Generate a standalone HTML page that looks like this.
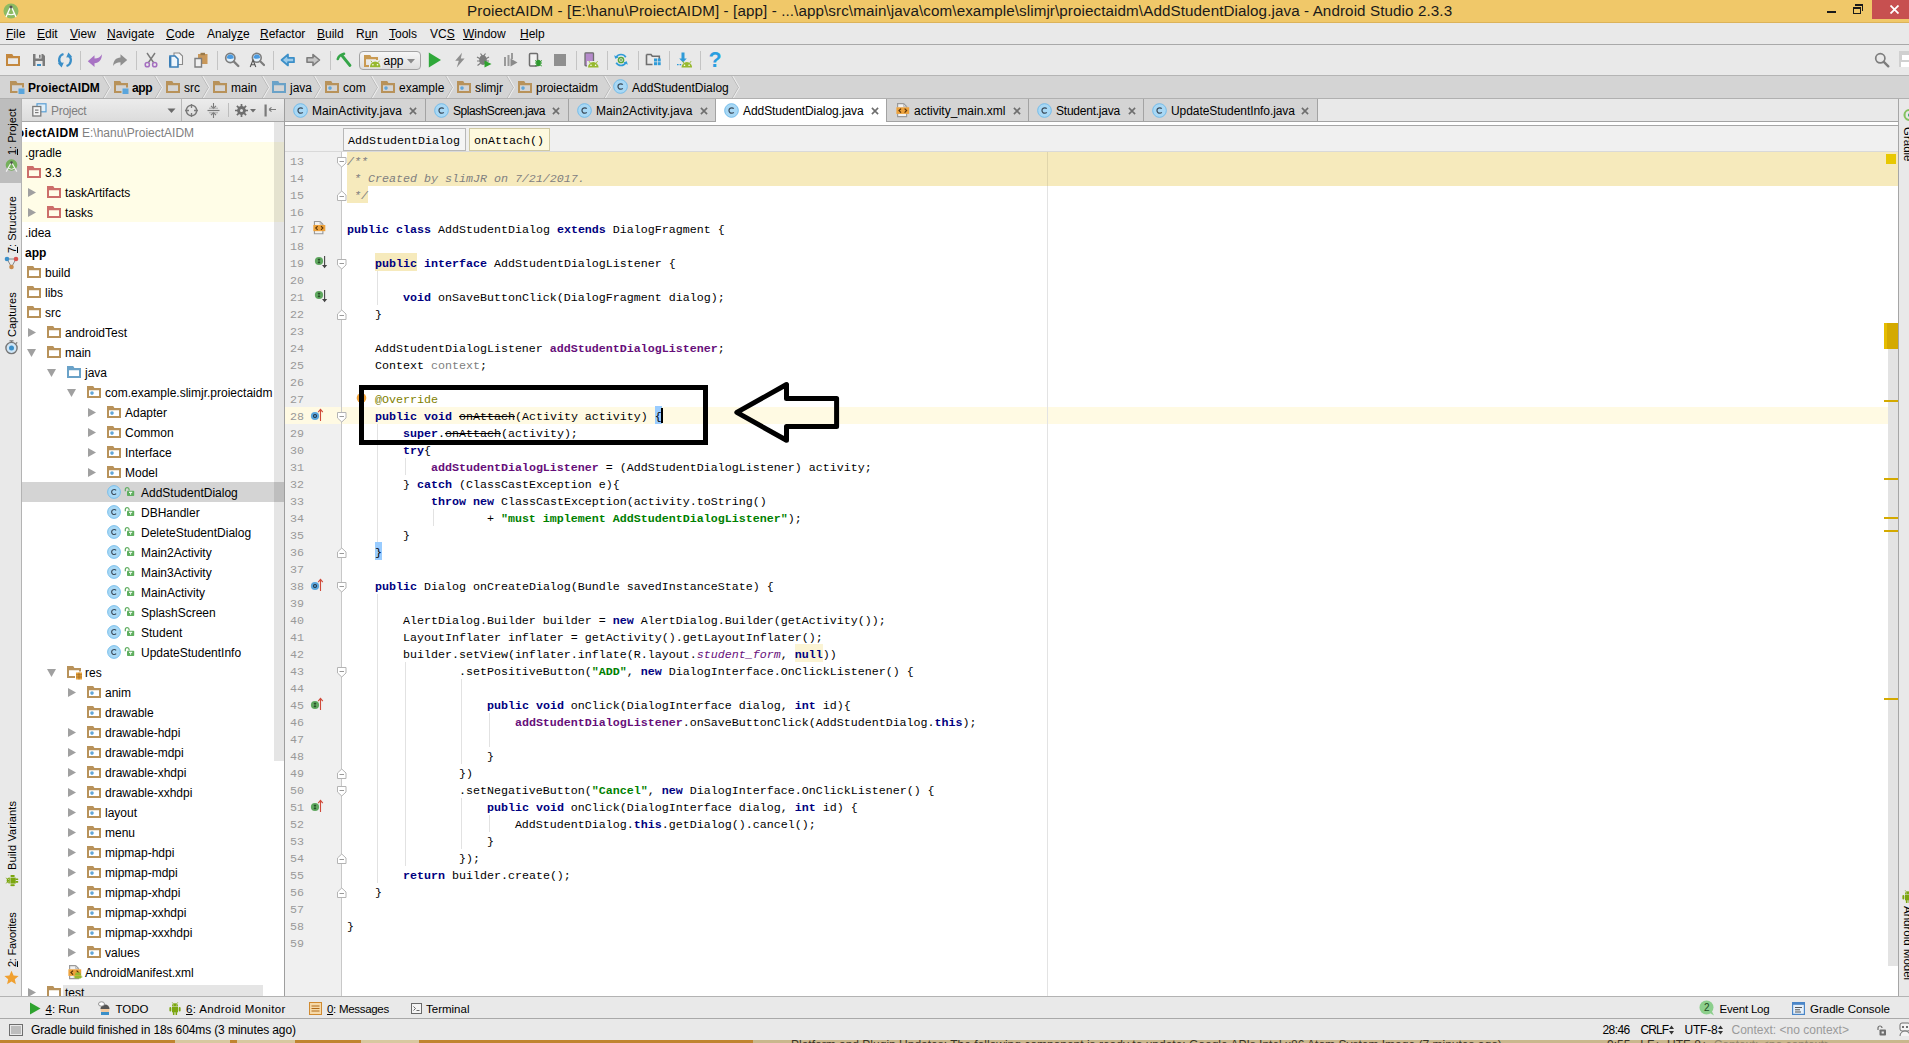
<!DOCTYPE html><html><head><meta charset="utf-8"><title>Android Studio</title><style>*{box-sizing:border-box;margin:0;padding:0}
html,body{width:1909px;height:1043px;overflow:hidden;background:#e9e9e9}
body{font-family:"Liberation Sans",sans-serif;font-size:12px;color:#000;position:relative}
.abs{position:absolute}
.t{position:absolute;white-space:nowrap;line-height:16px;height:16px}
u{text-decoration:underline;text-underline-offset:1px}
#title{left:0;top:0;width:1909px;height:23px;background:#f0c869}
#title .tt{left:467px;top:1px;font-size:15.2px;line-height:20px;height:20px;color:#1a1a1a;letter-spacing:0.095px}
#menu{left:0;top:23px;width:1909px;height:22px;background:#e9e9e9;border-bottom:1px solid #a9a9a9}
#toolbar{left:0;top:45px;width:1909px;height:31px;background:#e9e9e9;border-bottom:1px solid #b4b4b4}
#nav{left:0;top:76px;width:1909px;height:23px;background:#d4d4d4;border-bottom:1px solid #b0b0b0;overflow:hidden}
.sep{position:absolute;top:6px;width:1px;height:19px;background:#c4c4c4}
.ic{position:absolute}
.vt{position:absolute;font-size:11px;white-space:nowrap;line-height:16px;height:16px;width:0;transform-origin:0 0;transform:rotate(-90deg)}
#tree{left:22px;top:122px;width:262px;height:876px;background:#fff;overflow:hidden}
#tree b{font-weight:bold}
.mono,.cl,.ln{font-family:"Liberation Mono",monospace;font-size:11.667px}
.mono{white-space:nowrap;line-height:14px}
.cl{position:absolute;left:347px;height:17px;line-height:17px;white-space:pre;margin:0;padding-top:2px}
.ln{position:absolute;left:285px;width:19px;text-align:right;height:17px;line-height:17px;color:#999;padding-top:2px}
.k{color:#000080;font-weight:bold}
.s{color:#008000;font-weight:bold}
.f{color:#660e7a;font-weight:bold}
.sf{color:#660e7a;font-style:italic}
.c{color:#808080;font-style:italic}
.g{color:#808080}
.an{color:#808000}
.dp{text-decoration:line-through}
.hl{background:#f6eabc;padding-top:4px}
.hl2{background:#fbf4d4;padding-top:4px}
.br{background:#99ccff;padding-top:4px}
.vtr{position:absolute;white-space:nowrap;line-height:16px;height:16px;width:0;transform-origin:0 0;transform:rotate(90deg);font-size:11.5px}
.bt{font-size:11.5px}
</style></head><body>
<div id="title" class="abs">
<svg class="ic" style="left:3px;top:2px" width="18" height="18" viewBox="0 0 18 18"><circle cx="8" cy="9" r="7.5" fill="#8dbb63"/><path d="M3 15 L7.5 5 h1 L13 15" stroke="#fff" stroke-width="1.3" fill="none"/><path d="M4 11.5 Q8 14 12 11.5" stroke="#fff" stroke-width="1.2" fill="none"/><circle cx="8" cy="5" r="1.6" fill="#555"/></svg>
<div class="t tt">ProiectAIDM - [E:\hanu\ProiectAIDM] - [app] - ...\app\src\main\java\com\example\slimjr\proiectaidm\AddStudentDialog.java - Android Studio 2.3.3</div>
<div class="abs" style="left:1827px;top:11px;width:9px;height:2px;background:#1a1a1a"></div>
<div class="abs" style="left:1853px;top:7px;width:8px;height:7px;border:1px solid #1a1a1a;border-top-width:2px"></div>
<div class="abs" style="left:1855px;top:4px;width:8px;height:7px;border:1px solid #1a1a1a;border-top-width:2px;border-left:none;border-bottom:none"></div>
<div class="abs" style="left:1872px;top:0;width:37px;height:19px;background:#c75050"></div>
<svg class="ic" style="left:1890px;top:5px" width="9" height="9" viewBox="0 0 9 9"><path d="M0.5 0.5 L8.5 8.5 M8.5 0.5 L0.5 8.5" stroke="#fff" stroke-width="1.8"/></svg>
<div class="abs" style="left:0;top:22px;width:1909px;height:1px;background:#dcb35a"></div>
</div>
<div id="menu" class="abs">
<div class="t" style="left:6px;top:3px"><u>F</u>ile</div>
<div class="t" style="left:37px;top:3px"><u>E</u>dit</div>
<div class="t" style="left:70px;top:3px"><u>V</u>iew</div>
<div class="t" style="left:107px;top:3px"><u>N</u>avigate</div>
<div class="t" style="left:166px;top:3px"><u>C</u>ode</div>
<div class="t" style="left:207px;top:3px">Analy<u>z</u>e</div>
<div class="t" style="left:260px;top:3px"><u>R</u>efactor</div>
<div class="t" style="left:317px;top:3px"><u>B</u>uild</div>
<div class="t" style="left:356px;top:3px">R<u>u</u>n</div>
<div class="t" style="left:389px;top:3px"><u>T</u>ools</div>
<div class="t" style="left:430px;top:3px">VC<u>S</u></div>
<div class="t" style="left:463px;top:3px"><u>W</u>indow</div>
<div class="t" style="left:520px;top:3px"><u>H</u>elp</div>
</div>
<div id="toolbar" class="abs"><svg class="ic" style="left:6px;top:7px" width="16" height="16" viewBox="0 0 16 16"><g transform="translate(0 2)"><path fill-rule="evenodd" d="M0 0 H6.2 L7.4 2 H14 V12 H0 Z M2 4.2 V10 H12 V4.2 Z" fill="#c4883e"/></g></svg><svg class="ic" style="left:31px;top:7px" width="16" height="16" viewBox="0 0 16 16"><path d="M2 2h10l2 2v10H2z" fill="#7b7b7b"/><rect x="4.5" y="2" width="6" height="4.5" fill="#e9e9e9"/><rect x="8" y="2.8" width="1.6" height="3" fill="#7b7b7b"/><rect x="4.5" y="9" width="7" height="5" fill="#e9e9e9"/><rect x="6" y="12" width="4" height="2" fill="#3b8fc8"/></svg><svg class="ic" style="left:56.5px;top:7px" width="16" height="16" viewBox="0 0 16 16"><path d="M6.5 2 A6 6 0 0 0 4.5 12.5 M9.5 14 A6 6 0 0 0 11.5 3.5" fill="none" stroke="#3b8fc8" stroke-width="2.3"/><path d="M0.8 11.2 l6 -0.6 -2.2 5z M15.2 4.8 l-6 0.6 2.2 -5z" fill="#3b8fc8"/></svg><svg class="ic" style="left:87px;top:7px" width="16" height="16" viewBox="0 0 16 16"><path d="M0.8 9.2 L7.5 3.2 V6.6 C11 6.6 13.6 5 14.9 2.2 C14.9 7.8 12 11 7.5 11.2 V15 Z" fill="#a873c4"/></svg><svg class="ic" style="left:112px;top:7px" width="16" height="16" viewBox="0 0 16 16"><path d="M15.2 8 L8.5 2.2 V5.6 C4 5.8 1.2 8.8 1.2 14 C2.6 11.4 5 10.2 8.5 10.2 V13.8 Z" fill="#8f8f8f"/></svg><svg class="ic" style="left:143px;top:7px" width="16" height="16" viewBox="0 0 16 16"><path d="M4 1 L10.5 10.5 M12 1 L5.5 10.5" stroke="#7a7a7a" stroke-width="1.4"/><circle cx="4.3" cy="12.7" r="2.1" fill="none" stroke="#a56fc0" stroke-width="1.5"/><circle cx="11.7" cy="12.7" r="2.1" fill="none" stroke="#a56fc0" stroke-width="1.5"/></svg><svg class="ic" style="left:167.5px;top:7px" width="16" height="16" viewBox="0 0 16 16"><path d="M6 1h5.5l3 3v8.5H6z" fill="#f4f4f4" stroke="#8a8a8a" stroke-width="1.1"/><path d="M2 4h5l3 3v8H2z" fill="#eef5fb" stroke="#3b7fb8" stroke-width="1.6"/><path d="M2.2 4.5v10" stroke="#3b7fb8" stroke-width="2.4"/></svg><svg class="ic" style="left:193px;top:7px" width="16" height="16" viewBox="0 0 16 16"><rect x="5" y="2" width="9.5" height="10" fill="#c9985a"/><rect x="7.5" y="0.8" width="4.5" height="2.4" fill="#9a7a4a"/><path d="M2 6.5h6.5v8.5H2z" fill="#f0f0f0" stroke="#7d7d7d" stroke-width="1.4"/></svg><svg class="ic" style="left:224px;top:7px" width="16" height="16" viewBox="0 0 16 16"><circle cx="6.3" cy="6" r="4.6" fill="#e4f1fa" stroke="#7d7d7d" stroke-width="1.7"/><path d="M2.9 6.2 a3.4 3.6 0 0 1 6.8 0 q-3.4 1.6 -6.8 0z" fill="#4a9ae0"/><path d="M9.8 9.5 L14.3 14" stroke="#7d7d7d" stroke-width="2.4" stroke-linecap="round"/></svg><svg class="ic" style="left:249px;top:7px" width="16" height="16" viewBox="0 0 16 16"><circle cx="7.8" cy="5.8" r="4.4" fill="#e4f1fa" stroke="#7d7d7d" stroke-width="1.6"/><path d="M4.6 6 a3.2 3.4 0 0 1 6.4 0 q-3.2 1.5 -6.4 0z" fill="#4a9ae0"/><path d="M11.2 9.2 L15 13" stroke="#7d7d7d" stroke-width="2.2" stroke-linecap="round"/><path d="M1.2 15 L4 8 L6.8 15 M2.2 12.7h3.6" stroke="#555" stroke-width="1.1" fill="none"/></svg><svg class="ic" style="left:280px;top:7px" width="16" height="16" viewBox="0 0 16 16"><path d="M1.5 8 L8 2.5 V5.8 H14 V10.2 H8 V13.5z" fill="#9ccbea" stroke="#3b8fc8" stroke-width="1.7" stroke-linejoin="round"/></svg><svg class="ic" style="left:304.5px;top:7px" width="16" height="16" viewBox="0 0 16 16"><path d="M14.5 8 L8 2.5 V5.8 H2 V10.2 H8 V13.5z" fill="#c6c6c6" stroke="#7d7d7d" stroke-width="1.6" stroke-linejoin="round"/></svg><svg class="ic" style="left:336px;top:7px" width="16" height="16" viewBox="0 0 16 16"><path d="M1.8 7 Q3 3 8 1.8" fill="none" stroke="#35a548" stroke-width="2.6" stroke-linecap="round"/><path d="M6.3 4 L14 13.5" stroke="#35a548" stroke-width="2.8" stroke-linecap="round"/></svg><svg class="ic" style="left:427px;top:7px" width="16" height="16" viewBox="0 0 16 16"><path d="M1.8 0.5 L14 8 L1.8 15.5z" fill="#2fa83a"/></svg><svg class="ic" style="left:451.5px;top:7px" width="16" height="16" viewBox="0 0 16 16"><path d="M10 0.8 L3.2 8.8 h3.6 L4.8 15.4 L12.6 6.6 h-3.8z" fill="#8f8f8f"/></svg><svg class="ic" style="left:476px;top:7px" width="16" height="16" viewBox="0 0 16 16"><ellipse cx="7" cy="8" rx="3.8" ry="5" fill="#7d7d7d"/><path d="M1 5 l3.5 2 M1 9h3 M1.5 13.5 l3-2.2 M13 5 l-3.5 2 M13 9h-3 M4.5 1.5 l1.6 2.2 M9.5 1.5 l-1.6 2.2" stroke="#7d7d7d" stroke-width="1.2"/><path d="M8.5 8.5 L15.5 12 L8.5 15.5z" fill="#2ea32e"/></svg><svg class="ic" style="left:502px;top:7px" width="16" height="16" viewBox="0 0 16 16"><rect x="2" y="5" width="2" height="9" fill="#9a9a9a"/><rect x="5.5" y="3" width="2" height="11" fill="#9a9a9a"/><rect x="9" y="1" width="2" height="6" fill="#9a9a9a"/><path d="M8.5 6.5 L15.5 10.5 L8.5 14.5z" fill="#8a8a8a"/></svg><svg class="ic" style="left:527px;top:7px" width="16" height="16" viewBox="0 0 16 16"><rect x="2.5" y="1.5" width="8" height="12.5" rx="1" fill="#f2f2f2" stroke="#6e6e6e" stroke-width="1.5"/><ellipse cx="11.5" cy="11" rx="2.2" ry="3.2" fill="#2e9a2e"/><path d="M8 8.5l2 1.2M8 11h2M8.2 14l2-1.4M15 8.5l-2 1.2M15 11h-2M14.8 14l-2-1.4" stroke="#2e9a2e" stroke-width="1"/></svg><svg class="ic" style="left:552px;top:7px" width="16" height="16" viewBox="0 0 16 16"><rect x="2" y="2" width="12" height="12" fill="#8f8f8f"/></svg><svg class="ic" style="left:583px;top:7px" width="16" height="16" viewBox="0 0 16 16"><rect x="2" y="0.8" width="8.5" height="13" rx="0.8" fill="#b58acb" stroke="#6e6e6e" stroke-width="1.3"/><rect x="4" y="9" width="12" height="7" fill="#e9e9e9"/><g transform="translate(10.3 12.6) scale(1)"><path d="M-5.3 3 a5.3 5.6 0 0 1 10.6 0z" fill="#97b92f"/><path d="M-3 -1.6 l-1.3 -1.9 M3 -1.6 l1.3 -1.9" stroke="#97b92f" stroke-width="0.9"/><circle cx="-2.3" cy="0.6" r="0.8" fill="#fff"/><circle cx="2.3" cy="0.6" r="0.8" fill="#fff"/></g></svg><svg class="ic" style="left:613px;top:7px" width="16" height="16" viewBox="0 0 16 16"><path d="M3.2 5.2 A5.6 5.6 0 0 1 12.8 5.2 M12.8 10.8 A5.6 5.6 0 0 1 3.2 10.8" fill="none" stroke="#2f9bd8" stroke-width="1.7"/><path d="M1.2 3.2 l1 3.6 3.4-1.4z M14.8 12.8 l-1-3.6-3.4 1.4z" fill="#2f9bd8"/><circle cx="8" cy="8" r="2.6" fill="none" stroke="#5aa83a" stroke-width="1.5"/><circle cx="8" cy="8" r="0.9" fill="#5aa83a"/></svg><svg class="ic" style="left:645px;top:7px" width="16" height="16" viewBox="0 0 16 16"><path d="M1.5 2.5 h4.5 l1.3 1.8 h7 v3 M1.5 2.5 v10 h6" fill="none" stroke="#6e6e6e" stroke-width="1.6"/><rect x="9" y="6.5" width="3" height="3" fill="#2f9bd8"/><rect x="12.7" y="6.5" width="3" height="3" fill="#2f9bd8"/><rect x="9" y="10.2" width="3" height="3" fill="#2f9bd8"/><rect x="12.7" y="10.2" width="3" height="3" fill="#2f9bd8"/></svg><svg class="ic" style="left:676px;top:7px" width="16" height="16" viewBox="0 0 16 16"><path d="M5.5 0.5 h3 v6 h2.3 L7 10.5 L3.2 6.5 h2.3z" fill="#2f9bd8"/><path d="M1 12.6h5" stroke="#2f9bd8" stroke-width="1.3" stroke-dasharray="1.6 1"/><g transform="translate(10.8 12.6) scale(1)"><path d="M-5.3 3 a5.3 5.6 0 0 1 10.6 0z" fill="#97b92f"/><path d="M-3 -1.6 l-1.3 -1.9 M3 -1.6 l1.3 -1.9" stroke="#97b92f" stroke-width="0.9"/><circle cx="-2.3" cy="0.6" r="0.8" fill="#fff"/><circle cx="2.3" cy="0.6" r="0.8" fill="#fff"/></g></svg><div class="t" style="left:708.5px;top:3px;font-size:21.5px;font-weight:bold;color:#2a9fe0;line-height:24px;height:24px">?</div><svg class="ic" style="left:1874px;top:7px" width="16" height="16" viewBox="0 0 16 16"><circle cx="6.3" cy="6.3" r="4.6" fill="none" stroke="#7d7d7d" stroke-width="1.7"/><path d="M9.8 9.8 L14.3 14.3" stroke="#7d7d7d" stroke-width="2.4" stroke-linecap="round"/></svg><div class="abs" style="left:1899px;top:6px;width:10px;height:16px;background:#d0d0d0"></div><div class="abs" style="left:1902px;top:10px;width:7px;height:5px;background:#fff"></div><div class="abs" style="left:1901px;top:17px;width:8px;height:5px;background:#fff"></div><div class="sep" style="left:80px"></div><div class="sep" style="left:136px"></div><div class="sep" style="left:217px"></div><div class="sep" style="left:273px"></div><div class="sep" style="left:330px"></div><div class="sep" style="left:576px"></div><div class="sep" style="left:607px"></div><div class="sep" style="left:638px"></div><div class="sep" style="left:669px"></div><div class="sep" style="left:700px"></div><div class="abs" style="left:359px;top:6px;width:62px;height:19px;border:1px solid #a3a3a3;border-radius:4px;background:linear-gradient(#f6f6f6,#dedede)"></div><svg class="ic" style="left:364px;top:8px" width="18" height="16" viewBox="0 0 18 16"><g transform="translate(0 2)"><path fill-rule="evenodd" d="M0 0 H6.2 L7.4 2 H14 V12 H0 Z M2 4.2 V10 H12 V4.2 Z" fill="#c99a52"/><rect x="5" y="5" width="13" height="8" fill="#ececec"/><g transform="translate(11.2 9.2) scale(1)"><path d="M-5.3 3 a5.3 5.6 0 0 1 10.6 0z" fill="#97b92f"/><path d="M-3 -1.6 l-1.3 -1.9 M3 -1.6 l1.3 -1.9" stroke="#97b92f" stroke-width="0.9"/><circle cx="-2.3" cy="0.6" r="0.8" fill="#fff"/><circle cx="2.3" cy="0.6" r="0.8" fill="#fff"/></g></g></svg><div class="t" style="left:383.5px;top:8px">app</div><svg class="ic" style="left:407px;top:14px" width="8" height="5" viewBox="0 0 8 5"><path d="M0 0 h8 l-4 4.5z" fill="#8a8a8a"/></svg></div>
<div id="nav" class="abs">
<svg class="ic" style="left:10px;top:3px" width="16" height="16" viewBox="0 0 16 16"><g transform="translate(0 2)"><path fill-rule="evenodd" d="M0 0 H6.2 L7.4 2 H14 V12 H0 Z M2 4.2 V10 H12 V4.2 Z" fill="#b8925a"/><rect x="7.5" y="6.5" width="7" height="6.5" fill="#d4d4d4"/><rect x="8.5" y="7.5" width="6" height="5.5" fill="#5aa5dc"/></g></svg>
<div class="t" style="left:28px;top:4px;font-weight:bold;letter-spacing:0.05px">ProiectAIDM</div>
<svg class="ic" style="left:102px;top:0" width="9" height="23" viewBox="0 0 9 23"><path d="M0.8 0 L7.5 11.5 L0.8 23" fill="none" stroke="#b9b9b9" stroke-width="1"/><path d="M1.8 0 L8.5 11.5 L1.8 23" fill="none" stroke="#efefef" stroke-width="1"/></svg>
<svg class="ic" style="left:114px;top:3px" width="16" height="16" viewBox="0 0 16 16"><g transform="translate(0 2)"><path fill-rule="evenodd" d="M0 0 H6.2 L7.4 2 H14 V12 H0 Z M2 4.2 V10 H12 V4.2 Z" fill="#b8925a"/><rect x="7.5" y="6.5" width="7" height="6.5" fill="#d4d4d4"/><rect x="8.5" y="7.5" width="6" height="5.5" fill="#5aa5dc"/></g></svg>
<div class="t" style="left:132px;top:4px;font-weight:bold;letter-spacing:-0.35px">app</div>
<svg class="ic" style="left:154px;top:0" width="9" height="23" viewBox="0 0 9 23"><path d="M0.8 0 L7.5 11.5 L0.8 23" fill="none" stroke="#b9b9b9" stroke-width="1"/><path d="M1.8 0 L8.5 11.5 L1.8 23" fill="none" stroke="#efefef" stroke-width="1"/></svg>
<svg class="ic" style="left:166px;top:3px" width="16" height="16" viewBox="0 0 16 16"><g transform="translate(0 2)"><path fill-rule="evenodd" d="M0 0 H6.2 L7.4 2 H14 V12 H0 Z M2 4.2 V10 H12 V4.2 Z" fill="#b8925a"/></g></svg>
<div class="t" style="left:184px;top:4px;">src</div>
<svg class="ic" style="left:201px;top:0" width="9" height="23" viewBox="0 0 9 23"><path d="M0.8 0 L7.5 11.5 L0.8 23" fill="none" stroke="#b9b9b9" stroke-width="1"/><path d="M1.8 0 L8.5 11.5 L1.8 23" fill="none" stroke="#efefef" stroke-width="1"/></svg>
<svg class="ic" style="left:213px;top:3px" width="16" height="16" viewBox="0 0 16 16"><g transform="translate(0 2)"><path fill-rule="evenodd" d="M0 0 H6.2 L7.4 2 H14 V12 H0 Z M2 4.2 V10 H12 V4.2 Z" fill="#b8925a"/></g></svg>
<div class="t" style="left:231px;top:4px;">main</div>
<svg class="ic" style="left:261px;top:0" width="9" height="23" viewBox="0 0 9 23"><path d="M0.8 0 L7.5 11.5 L0.8 23" fill="none" stroke="#b9b9b9" stroke-width="1"/><path d="M1.8 0 L8.5 11.5 L1.8 23" fill="none" stroke="#efefef" stroke-width="1"/></svg>
<svg class="ic" style="left:272px;top:3px" width="16" height="16" viewBox="0 0 16 16"><g transform="translate(0 2)"><path fill-rule="evenodd" d="M0 0 H6.2 L7.4 2 H14 V12 H0 Z M2 4.2 V10 H12 V4.2 Z" fill="#6aa2c8"/></g></svg>
<div class="t" style="left:290px;top:4px;">java</div>
<svg class="ic" style="left:313px;top:0" width="9" height="23" viewBox="0 0 9 23"><path d="M0.8 0 L7.5 11.5 L0.8 23" fill="none" stroke="#b9b9b9" stroke-width="1"/><path d="M1.8 0 L8.5 11.5 L1.8 23" fill="none" stroke="#efefef" stroke-width="1"/></svg>
<svg class="ic" style="left:325px;top:3px" width="16" height="16" viewBox="0 0 16 16"><g transform="translate(0 2)"><path fill-rule="evenodd" d="M0 0 H6.2 L7.4 2 H14 V12 H0 Z M2 4.2 V10 H12 V4.2 Z" fill="#b8925a"/><circle cx="5" cy="7.1" r="1.8" fill="#62a6d8"/></g></svg>
<div class="t" style="left:343px;top:4px;">com</div>
<svg class="ic" style="left:370px;top:0" width="9" height="23" viewBox="0 0 9 23"><path d="M0.8 0 L7.5 11.5 L0.8 23" fill="none" stroke="#b9b9b9" stroke-width="1"/><path d="M1.8 0 L8.5 11.5 L1.8 23" fill="none" stroke="#efefef" stroke-width="1"/></svg>
<svg class="ic" style="left:381px;top:3px" width="16" height="16" viewBox="0 0 16 16"><g transform="translate(0 2)"><path fill-rule="evenodd" d="M0 0 H6.2 L7.4 2 H14 V12 H0 Z M2 4.2 V10 H12 V4.2 Z" fill="#b8925a"/><circle cx="5" cy="7.1" r="1.8" fill="#62a6d8"/></g></svg>
<div class="t" style="left:399px;top:4px;">example</div>
<svg class="ic" style="left:445px;top:0" width="9" height="23" viewBox="0 0 9 23"><path d="M0.8 0 L7.5 11.5 L0.8 23" fill="none" stroke="#b9b9b9" stroke-width="1"/><path d="M1.8 0 L8.5 11.5 L1.8 23" fill="none" stroke="#efefef" stroke-width="1"/></svg>
<svg class="ic" style="left:457px;top:3px" width="16" height="16" viewBox="0 0 16 16"><g transform="translate(0 2)"><path fill-rule="evenodd" d="M0 0 H6.2 L7.4 2 H14 V12 H0 Z M2 4.2 V10 H12 V4.2 Z" fill="#b8925a"/><circle cx="5" cy="7.1" r="1.8" fill="#62a6d8"/></g></svg>
<div class="t" style="left:475px;top:4px;">slimjr</div>
<svg class="ic" style="left:506px;top:0" width="9" height="23" viewBox="0 0 9 23"><path d="M0.8 0 L7.5 11.5 L0.8 23" fill="none" stroke="#b9b9b9" stroke-width="1"/><path d="M1.8 0 L8.5 11.5 L1.8 23" fill="none" stroke="#efefef" stroke-width="1"/></svg>
<svg class="ic" style="left:518px;top:3px" width="16" height="16" viewBox="0 0 16 16"><g transform="translate(0 2)"><path fill-rule="evenodd" d="M0 0 H6.2 L7.4 2 H14 V12 H0 Z M2 4.2 V10 H12 V4.2 Z" fill="#b8925a"/><circle cx="5" cy="7.1" r="1.8" fill="#62a6d8"/></g></svg>
<div class="t" style="left:536px;top:4px;">proiectaidm</div>
<svg class="ic" style="left:603px;top:0" width="9" height="23" viewBox="0 0 9 23"><path d="M0.8 0 L7.5 11.5 L0.8 23" fill="none" stroke="#b9b9b9" stroke-width="1"/><path d="M1.8 0 L8.5 11.5 L1.8 23" fill="none" stroke="#efefef" stroke-width="1"/></svg>
<svg class="ic" style="left:613px;top:3px" width="15" height="15" viewBox="0 0 16 16"><circle cx="8" cy="8" r="7.3" fill="#a8d8f5" stroke="#6fbaea" stroke-width="1"/><path d="M10.4 6.1 A2.9 2.9 0 1 0 10.4 9.9" fill="none" stroke="#3a4a5a" stroke-width="1.3"/></svg>
<div class="t" style="left:632px;top:4px;">AddStudentDialog</div>
<svg class="ic" style="left:731px;top:0" width="9" height="23" viewBox="0 0 9 23"><path d="M0.8 0 L7.5 11.5 L0.8 23" fill="none" stroke="#b9b9b9" stroke-width="1"/><path d="M1.8 0 L8.5 11.5 L1.8 23" fill="none" stroke="#efefef" stroke-width="1"/></svg>
</div>
<div class="abs" style="left:0;top:99px;width:22px;height:899px;background:#e9e9e9;border-right:1px solid #b3b3b3"></div>
<div class="abs" style="left:0;top:99px;width:21px;height:84px;background:#bdbdbd"></div>
<div class="vt" style="left:3.5px;top:155px;"><u>1</u>: Project</div>
<svg class="ic" style="left:4px;top:158px" width="15" height="15" viewBox="0 0 15 15"><circle cx="7.5" cy="7" r="5.8" fill="#74b05a"/><path d="M2.2 13.6 L7 5 h1 L12.8 13.6" stroke="#f2f2f2" stroke-width="1.2" fill="none"/><path d="M4.2 10.2 Q7.5 12.4 10.8 10.2" stroke="#f2f2f2" stroke-width="1" fill="none"/><circle cx="7.5" cy="4.6" r="1.3" fill="#4a4a4a"/></svg>
<div class="vt" style="left:3.5px;top:253px;"><u>7</u>: Structure</div>
<svg class="ic" style="left:4px;top:256px" width="15" height="14" viewBox="0 0 15 14"><path d="M3 3 L7.5 11 L12 3z" fill="none" stroke="#888" stroke-width="1"/><circle cx="3" cy="3" r="2.3" fill="#3b8fc8"/><circle cx="12" cy="3" r="2.3" fill="#d9534f"/><circle cx="7.5" cy="11" r="2.3" fill="#c98a4a"/></svg>
<div class="vt" style="left:3.5px;top:337px;">Captures</div>
<svg class="ic" style="left:4px;top:340px" width="15" height="15" viewBox="0 0 15 15"><circle cx="7.5" cy="8" r="5.6" fill="#cfe6f7" stroke="#777" stroke-width="1.4"/><circle cx="7.5" cy="8" r="2.5" fill="#3b8fc8"/><path d="M7.5 2.5V0.8M5.5 0.8h4M12 3.5l1.2-1.2" stroke="#777" stroke-width="1.2"/></svg>
<div class="vt" style="left:3.5px;top:870px;letter-spacing:0.15px">Build Variants</div>
<svg class="ic" style="transform:rotate(-90deg);left:5.5px;top:873.5px" width="12" height="13.2" viewBox="0 0 12 13.2"><g transform="scale(1)"><path d="M3.2 0.3 L4.4 1.9 M8.8 0.3 L7.6 1.9" stroke="#7ba60f" stroke-width="0.7"/><path d="M3 4.4 a3 3.1 0 0 1 6 0z" fill="#7ba60f"/><circle cx="4.7" cy="3" r="0.45" fill="#fff"/><circle cx="7.3" cy="3" r="0.45" fill="#fff"/><rect x="3" y="5" width="6" height="5.3" fill="#7ba60f"/><rect x="0.4" y="5" width="1.9" height="4.4" rx="0.9" fill="#7ba60f"/><rect x="9.7" y="5" width="1.9" height="4.4" rx="0.9" fill="#7ba60f"/><rect x="3.9" y="10" width="1.6" height="3.1" rx="0.6" fill="#7ba60f"/><rect x="6.5" y="10" width="1.6" height="3.1" rx="0.6" fill="#7ba60f"/></g></svg>
<div class="vt" style="left:3.5px;top:967px;letter-spacing:-0.25px"><u>2</u>: Favorites</div>
<svg class="ic" style="left:4px;top:970px" width="15" height="15" viewBox="0 0 15 15"><path d="M7.5 0.8 L9.6 5.4 L14.6 5.9 L10.8 9.2 L11.9 14.2 L7.5 11.6 L3.1 14.2 L4.2 9.2 L0.4 5.9 L5.4 5.4z" fill="#f0a030"/></svg>
<div class="abs" style="left:22px;top:99px;width:262px;height:23px;background:linear-gradient(#ececec,#dcdcdc);border-bottom:1px solid #a8a8a8"></div>
<svg class="ic" style="left:32px;top:103px" width="15" height="14" viewBox="0 0 15 14"><rect x="5" y="0.8" width="9" height="8" fill="#dfeffa" stroke="#5a9fd4" stroke-width="1.2"/><rect x="0.8" y="3.5" width="8" height="9.5" fill="#f4f4f4" stroke="#7a7a7a" stroke-width="1.3"/><rect x="3" y="6.5" width="3.5" height="1.2" fill="#7a7a7a"/><rect x="3" y="9" width="3.5" height="1.2" fill="#7a7a7a"/></svg>
<div class="t" style="left:51px;top:103px;color:#7f7f7f;letter-spacing:-0.3px">Project</div>
<svg class="ic" style="left:167px;top:108px" width="9" height="6" viewBox="0 0 9 6"><path d="M0.5 0.5 h8 l-4 4.5z" fill="#6a6a6a"/></svg>
<div class="abs" style="left:181px;top:99px;width:1px;height:22px;background:#b8b8b8"></div>
<svg class="ic" style="left:185px;top:104px" width="13" height="13" viewBox="0 0 13 13"><circle cx="6.5" cy="6.5" r="5.2" fill="none" stroke="#7a7a7a" stroke-width="1.5"/><path d="M6.5 0v4M6.5 9v4M0 6.5h4M9 6.5h4" stroke="#7a7a7a" stroke-width="1.3"/></svg>
<svg class="ic" style="left:207px;top:103px" width="13" height="15" viewBox="0 0 13 15"><path d="M0.5 7.5h12" stroke="#7a7a7a" stroke-width="1.2"/><path d="M6.5 0v5M4 2.8L6.5 5.4L9 2.8M6.5 15v-5M4 12.2L6.5 9.6L9 12.2" stroke="#7a7a7a" stroke-width="1.1" fill="none"/><path d="M2 5.2h9M2 9.8h9" stroke="#9a9a9a" stroke-width="0.8"/></svg>
<div class="abs" style="left:228px;top:103px;width:1px;height:14px;background:#bdbdbd"></div>
<svg class="ic" style="left:235px;top:104px" width="13" height="13" viewBox="0 0 13 13"><circle cx="6.5" cy="6.5" r="3.2" fill="none" stroke="#6e6e6e" stroke-width="2.4"/><path d="M6.5 0v13M0 6.5h13M1.9 1.9l9.2 9.2M11.1 1.9l-9.2 9.2" stroke="#6e6e6e" stroke-width="1.7"/><circle cx="6.5" cy="6.5" r="1.5" fill="#e4e4e4"/></svg>
<svg class="ic" style="left:250px;top:109px" width="6" height="4" viewBox="0 0 6 4"><path d="M0 0h6l-3 3.5z" fill="#6e6e6e"/></svg>
<svg class="ic" style="left:264px;top:104px" width="12" height="13" viewBox="0 0 12 13"><rect x="0.5" y="0.5" width="2.2" height="12" fill="#7a7a7a"/><path d="M5 5.5h7M5 5.5l2.5-2.2M5 5.5l2.5 2.2" stroke="#7a7a7a" stroke-width="1.1" fill="none"/></svg>
<div id="tree" class="abs">
<div class="abs" style="left:0;top:20px;width:262px;height:80px;background:#fffde7"></div>
<div class="abs" style="left:0;top:360px;width:262px;height:20px;background:#d4d4d4"></div>
<div class="t" style="left:-18.8px;top:2.5px"><b style="letter-spacing:0.4px">ProiectAIDM</b></div>
<div class="t" style="left:3px;top:22.5px">.gradle</div>
<svg class="ic" style="left:5px;top:42px" width="16" height="16" viewBox="0 0 16 16"><g transform="translate(0 2)"><path fill-rule="evenodd" d="M0 0 H6.2 L7.4 2 H14 V12 H0 Z M2 4.2 V10 H12 V4.2 Z" fill="#cc6e6a"/></g></svg>
<div class="t" style="left:23px;top:42.5px">3.3</div>
<svg class="ic" style="left:6px;top:66px" width="8" height="9" viewBox="0 0 8 9"><path d="M0 0 L8 4.5 L0 9z" fill="#a0a0a0"/></svg>
<svg class="ic" style="left:25px;top:62px" width="16" height="16" viewBox="0 0 16 16"><g transform="translate(0 2)"><path fill-rule="evenodd" d="M0 0 H6.2 L7.4 2 H14 V12 H0 Z M2 4.2 V10 H12 V4.2 Z" fill="#cc6e6a"/></g></svg>
<div class="t" style="left:43px;top:62.5px">taskArtifacts</div>
<svg class="ic" style="left:6px;top:86px" width="8" height="9" viewBox="0 0 8 9"><path d="M0 0 L8 4.5 L0 9z" fill="#a0a0a0"/></svg>
<svg class="ic" style="left:25px;top:82px" width="16" height="16" viewBox="0 0 16 16"><g transform="translate(0 2)"><path fill-rule="evenodd" d="M0 0 H6.2 L7.4 2 H14 V12 H0 Z M2 4.2 V10 H12 V4.2 Z" fill="#cc6e6a"/></g></svg>
<div class="t" style="left:43px;top:82.5px">tasks</div>
<div class="t" style="left:3px;top:102.5px">.idea</div>
<div class="t" style="left:3px;top:122.5px"><b>app</b></div>
<svg class="ic" style="left:5px;top:142px" width="16" height="16" viewBox="0 0 16 16"><g transform="translate(0 2)"><path fill-rule="evenodd" d="M0 0 H6.2 L7.4 2 H14 V12 H0 Z M2 4.2 V10 H12 V4.2 Z" fill="#b8925a"/></g></svg>
<div class="t" style="left:23px;top:142.5px">build</div>
<svg class="ic" style="left:5px;top:162px" width="16" height="16" viewBox="0 0 16 16"><g transform="translate(0 2)"><path fill-rule="evenodd" d="M0 0 H6.2 L7.4 2 H14 V12 H0 Z M2 4.2 V10 H12 V4.2 Z" fill="#b8925a"/></g></svg>
<div class="t" style="left:23px;top:162.5px">libs</div>
<svg class="ic" style="left:5px;top:182px" width="16" height="16" viewBox="0 0 16 16"><g transform="translate(0 2)"><path fill-rule="evenodd" d="M0 0 H6.2 L7.4 2 H14 V12 H0 Z M2 4.2 V10 H12 V4.2 Z" fill="#b8925a"/></g></svg>
<div class="t" style="left:23px;top:182.5px">src</div>
<svg class="ic" style="left:6px;top:206px" width="8" height="9" viewBox="0 0 8 9"><path d="M0 0 L8 4.5 L0 9z" fill="#a0a0a0"/></svg>
<svg class="ic" style="left:25px;top:202px" width="16" height="16" viewBox="0 0 16 16"><g transform="translate(0 2)"><path fill-rule="evenodd" d="M0 0 H6.2 L7.4 2 H14 V12 H0 Z M2 4.2 V10 H12 V4.2 Z" fill="#b8925a"/></g></svg>
<div class="t" style="left:43px;top:202.5px">androidTest</div>
<svg class="ic" style="left:5px;top:227px" width="9" height="8" viewBox="0 0 9 8"><path d="M0 0 h9 L4.5 8z" fill="#a0a0a0"/></svg>
<svg class="ic" style="left:25px;top:222px" width="16" height="16" viewBox="0 0 16 16"><g transform="translate(0 2)"><path fill-rule="evenodd" d="M0 0 H6.2 L7.4 2 H14 V12 H0 Z M2 4.2 V10 H12 V4.2 Z" fill="#b8925a"/></g></svg>
<div class="t" style="left:43px;top:222.5px">main</div>
<svg class="ic" style="left:25px;top:247px" width="9" height="8" viewBox="0 0 9 8"><path d="M0 0 h9 L4.5 8z" fill="#a0a0a0"/></svg>
<svg class="ic" style="left:45px;top:242px" width="16" height="16" viewBox="0 0 16 16"><g transform="translate(0 2)"><path fill-rule="evenodd" d="M0 0 H6.2 L7.4 2 H14 V12 H0 Z M2 4.2 V10 H12 V4.2 Z" fill="#6aa2c8"/></g></svg>
<div class="t" style="left:63px;top:242.5px">java</div>
<svg class="ic" style="left:45px;top:267px" width="9" height="8" viewBox="0 0 9 8"><path d="M0 0 h9 L4.5 8z" fill="#a0a0a0"/></svg>
<svg class="ic" style="left:65px;top:262px" width="16" height="16" viewBox="0 0 16 16"><g transform="translate(0 2)"><path fill-rule="evenodd" d="M0 0 H6.2 L7.4 2 H14 V12 H0 Z M2 4.2 V10 H12 V4.2 Z" fill="#b8925a"/><circle cx="5" cy="7.1" r="1.8" fill="#62a6d8"/></g></svg>
<div class="t" style="left:83px;top:262.5px">com.example.slimjr.proiectaidm</div>
<svg class="ic" style="left:66px;top:286px" width="8" height="9" viewBox="0 0 8 9"><path d="M0 0 L8 4.5 L0 9z" fill="#a0a0a0"/></svg>
<svg class="ic" style="left:85px;top:282px" width="16" height="16" viewBox="0 0 16 16"><g transform="translate(0 2)"><path fill-rule="evenodd" d="M0 0 H6.2 L7.4 2 H14 V12 H0 Z M2 4.2 V10 H12 V4.2 Z" fill="#b8925a"/><circle cx="5" cy="7.1" r="1.8" fill="#62a6d8"/></g></svg>
<div class="t" style="left:103px;top:282.5px">Adapter</div>
<svg class="ic" style="left:66px;top:306px" width="8" height="9" viewBox="0 0 8 9"><path d="M0 0 L8 4.5 L0 9z" fill="#a0a0a0"/></svg>
<svg class="ic" style="left:85px;top:302px" width="16" height="16" viewBox="0 0 16 16"><g transform="translate(0 2)"><path fill-rule="evenodd" d="M0 0 H6.2 L7.4 2 H14 V12 H0 Z M2 4.2 V10 H12 V4.2 Z" fill="#b8925a"/><circle cx="5" cy="7.1" r="1.8" fill="#62a6d8"/></g></svg>
<div class="t" style="left:103px;top:302.5px">Common</div>
<svg class="ic" style="left:66px;top:326px" width="8" height="9" viewBox="0 0 8 9"><path d="M0 0 L8 4.5 L0 9z" fill="#a0a0a0"/></svg>
<svg class="ic" style="left:85px;top:322px" width="16" height="16" viewBox="0 0 16 16"><g transform="translate(0 2)"><path fill-rule="evenodd" d="M0 0 H6.2 L7.4 2 H14 V12 H0 Z M2 4.2 V10 H12 V4.2 Z" fill="#b8925a"/><circle cx="5" cy="7.1" r="1.8" fill="#62a6d8"/></g></svg>
<div class="t" style="left:103px;top:322.5px">Interface</div>
<svg class="ic" style="left:66px;top:346px" width="8" height="9" viewBox="0 0 8 9"><path d="M0 0 L8 4.5 L0 9z" fill="#a0a0a0"/></svg>
<svg class="ic" style="left:85px;top:342px" width="16" height="16" viewBox="0 0 16 16"><g transform="translate(0 2)"><path fill-rule="evenodd" d="M0 0 H6.2 L7.4 2 H14 V12 H0 Z M2 4.2 V10 H12 V4.2 Z" fill="#b8925a"/><circle cx="5" cy="7.1" r="1.8" fill="#62a6d8"/></g></svg>
<div class="t" style="left:103px;top:342.5px">Model</div>
<svg class="ic" style="left:85px;top:363px" width="14" height="14" viewBox="0 0 16 16"><circle cx="8" cy="8" r="7.3" fill="#a8d8f5" stroke="#6fbaea" stroke-width="1"/><path d="M10.4 6.1 A2.9 2.9 0 1 0 10.4 9.9" fill="none" stroke="#3a4a5a" stroke-width="1.3"/></svg>
<svg class="ic" style="left:102px;top:363px" width="11" height="12" viewBox="0 0 11 12"><path d="M1.3 6.3 V4.6 a1.9 1.9 0 0 1 3.8 0 V5.4" fill="none" stroke="#5fae5f" stroke-width="1.2"/><rect x="3" y="5.8" width="7.2" height="5.2" rx="0.7" fill="#5fae5f"/><path d="M5 7.4h3.2M6.6 7.4v2.4" stroke="#eef8ee" stroke-width="1.1"/></svg>
<div class="t" style="left:119px;top:362.5px">AddStudentDialog</div>
<svg class="ic" style="left:85px;top:383px" width="14" height="14" viewBox="0 0 16 16"><circle cx="8" cy="8" r="7.3" fill="#a8d8f5" stroke="#6fbaea" stroke-width="1"/><path d="M10.4 6.1 A2.9 2.9 0 1 0 10.4 9.9" fill="none" stroke="#3a4a5a" stroke-width="1.3"/></svg>
<svg class="ic" style="left:102px;top:383px" width="11" height="12" viewBox="0 0 11 12"><path d="M1.3 6.3 V4.6 a1.9 1.9 0 0 1 3.8 0 V5.4" fill="none" stroke="#5fae5f" stroke-width="1.2"/><rect x="3" y="5.8" width="7.2" height="5.2" rx="0.7" fill="#5fae5f"/><path d="M5 7.4h3.2M6.6 7.4v2.4" stroke="#eef8ee" stroke-width="1.1"/></svg>
<div class="t" style="left:119px;top:382.5px">DBHandler</div>
<svg class="ic" style="left:85px;top:403px" width="14" height="14" viewBox="0 0 16 16"><circle cx="8" cy="8" r="7.3" fill="#a8d8f5" stroke="#6fbaea" stroke-width="1"/><path d="M10.4 6.1 A2.9 2.9 0 1 0 10.4 9.9" fill="none" stroke="#3a4a5a" stroke-width="1.3"/></svg>
<svg class="ic" style="left:102px;top:403px" width="11" height="12" viewBox="0 0 11 12"><path d="M1.3 6.3 V4.6 a1.9 1.9 0 0 1 3.8 0 V5.4" fill="none" stroke="#5fae5f" stroke-width="1.2"/><rect x="3" y="5.8" width="7.2" height="5.2" rx="0.7" fill="#5fae5f"/><path d="M5 7.4h3.2M6.6 7.4v2.4" stroke="#eef8ee" stroke-width="1.1"/></svg>
<div class="t" style="left:119px;top:402.5px">DeleteStudentDialog</div>
<svg class="ic" style="left:85px;top:423px" width="14" height="14" viewBox="0 0 16 16"><circle cx="8" cy="8" r="7.3" fill="#a8d8f5" stroke="#6fbaea" stroke-width="1"/><path d="M10.4 6.1 A2.9 2.9 0 1 0 10.4 9.9" fill="none" stroke="#3a4a5a" stroke-width="1.3"/></svg>
<svg class="ic" style="left:102px;top:423px" width="11" height="12" viewBox="0 0 11 12"><path d="M1.3 6.3 V4.6 a1.9 1.9 0 0 1 3.8 0 V5.4" fill="none" stroke="#5fae5f" stroke-width="1.2"/><rect x="3" y="5.8" width="7.2" height="5.2" rx="0.7" fill="#5fae5f"/><path d="M5 7.4h3.2M6.6 7.4v2.4" stroke="#eef8ee" stroke-width="1.1"/></svg>
<div class="t" style="left:119px;top:422.5px">Main2Activity</div>
<svg class="ic" style="left:85px;top:443px" width="14" height="14" viewBox="0 0 16 16"><circle cx="8" cy="8" r="7.3" fill="#a8d8f5" stroke="#6fbaea" stroke-width="1"/><path d="M10.4 6.1 A2.9 2.9 0 1 0 10.4 9.9" fill="none" stroke="#3a4a5a" stroke-width="1.3"/></svg>
<svg class="ic" style="left:102px;top:443px" width="11" height="12" viewBox="0 0 11 12"><path d="M1.3 6.3 V4.6 a1.9 1.9 0 0 1 3.8 0 V5.4" fill="none" stroke="#5fae5f" stroke-width="1.2"/><rect x="3" y="5.8" width="7.2" height="5.2" rx="0.7" fill="#5fae5f"/><path d="M5 7.4h3.2M6.6 7.4v2.4" stroke="#eef8ee" stroke-width="1.1"/></svg>
<div class="t" style="left:119px;top:442.5px">Main3Activity</div>
<svg class="ic" style="left:85px;top:463px" width="14" height="14" viewBox="0 0 16 16"><circle cx="8" cy="8" r="7.3" fill="#a8d8f5" stroke="#6fbaea" stroke-width="1"/><path d="M10.4 6.1 A2.9 2.9 0 1 0 10.4 9.9" fill="none" stroke="#3a4a5a" stroke-width="1.3"/></svg>
<svg class="ic" style="left:102px;top:463px" width="11" height="12" viewBox="0 0 11 12"><path d="M1.3 6.3 V4.6 a1.9 1.9 0 0 1 3.8 0 V5.4" fill="none" stroke="#5fae5f" stroke-width="1.2"/><rect x="3" y="5.8" width="7.2" height="5.2" rx="0.7" fill="#5fae5f"/><path d="M5 7.4h3.2M6.6 7.4v2.4" stroke="#eef8ee" stroke-width="1.1"/></svg>
<div class="t" style="left:119px;top:462.5px">MainActivity</div>
<svg class="ic" style="left:85px;top:483px" width="14" height="14" viewBox="0 0 16 16"><circle cx="8" cy="8" r="7.3" fill="#a8d8f5" stroke="#6fbaea" stroke-width="1"/><path d="M10.4 6.1 A2.9 2.9 0 1 0 10.4 9.9" fill="none" stroke="#3a4a5a" stroke-width="1.3"/></svg>
<svg class="ic" style="left:102px;top:483px" width="11" height="12" viewBox="0 0 11 12"><path d="M1.3 6.3 V4.6 a1.9 1.9 0 0 1 3.8 0 V5.4" fill="none" stroke="#5fae5f" stroke-width="1.2"/><rect x="3" y="5.8" width="7.2" height="5.2" rx="0.7" fill="#5fae5f"/><path d="M5 7.4h3.2M6.6 7.4v2.4" stroke="#eef8ee" stroke-width="1.1"/></svg>
<div class="t" style="left:119px;top:482.5px">SplashScreen</div>
<svg class="ic" style="left:85px;top:503px" width="14" height="14" viewBox="0 0 16 16"><circle cx="8" cy="8" r="7.3" fill="#a8d8f5" stroke="#6fbaea" stroke-width="1"/><path d="M10.4 6.1 A2.9 2.9 0 1 0 10.4 9.9" fill="none" stroke="#3a4a5a" stroke-width="1.3"/></svg>
<svg class="ic" style="left:102px;top:503px" width="11" height="12" viewBox="0 0 11 12"><path d="M1.3 6.3 V4.6 a1.9 1.9 0 0 1 3.8 0 V5.4" fill="none" stroke="#5fae5f" stroke-width="1.2"/><rect x="3" y="5.8" width="7.2" height="5.2" rx="0.7" fill="#5fae5f"/><path d="M5 7.4h3.2M6.6 7.4v2.4" stroke="#eef8ee" stroke-width="1.1"/></svg>
<div class="t" style="left:119px;top:502.5px">Student</div>
<svg class="ic" style="left:85px;top:523px" width="14" height="14" viewBox="0 0 16 16"><circle cx="8" cy="8" r="7.3" fill="#a8d8f5" stroke="#6fbaea" stroke-width="1"/><path d="M10.4 6.1 A2.9 2.9 0 1 0 10.4 9.9" fill="none" stroke="#3a4a5a" stroke-width="1.3"/></svg>
<svg class="ic" style="left:102px;top:523px" width="11" height="12" viewBox="0 0 11 12"><path d="M1.3 6.3 V4.6 a1.9 1.9 0 0 1 3.8 0 V5.4" fill="none" stroke="#5fae5f" stroke-width="1.2"/><rect x="3" y="5.8" width="7.2" height="5.2" rx="0.7" fill="#5fae5f"/><path d="M5 7.4h3.2M6.6 7.4v2.4" stroke="#eef8ee" stroke-width="1.1"/></svg>
<div class="t" style="left:119px;top:522.5px">UpdateStudentInfo</div>
<svg class="ic" style="left:25px;top:547px" width="9" height="8" viewBox="0 0 9 8"><path d="M0 0 h9 L4.5 8z" fill="#a0a0a0"/></svg>
<svg class="ic" style="left:45px;top:542px" width="16" height="16" viewBox="0 0 16 16"><g transform="translate(0 2)"><path fill-rule="evenodd" d="M0 0 H6.2 L7.4 2 H14 V12 H0 Z M2 4.2 V10 H12 V4.2 Z" fill="#b8925a"/><rect x="8" y="5.5" width="7" height="8" fill="#fff"/><rect x="9" y="6.5" width="6" height="7" fill="#e8a33d"/><path d="M9 8.8h6M9 11h6M12 6.5v7" stroke="#8a5a1a" stroke-width="0.6"/></g></svg>
<div class="t" style="left:63px;top:542.5px">res</div>
<svg class="ic" style="left:46px;top:566px" width="8" height="9" viewBox="0 0 8 9"><path d="M0 0 L8 4.5 L0 9z" fill="#a0a0a0"/></svg>
<svg class="ic" style="left:65px;top:562px" width="16" height="16" viewBox="0 0 16 16"><g transform="translate(0 2)"><path fill-rule="evenodd" d="M0 0 H6.2 L7.4 2 H14 V12 H0 Z M2 4.2 V10 H12 V4.2 Z" fill="#b8925a"/><circle cx="5" cy="7.1" r="1.8" fill="#62a6d8"/></g></svg>
<div class="t" style="left:83px;top:562.5px">anim</div>
<svg class="ic" style="left:65px;top:582px" width="16" height="16" viewBox="0 0 16 16"><g transform="translate(0 2)"><path fill-rule="evenodd" d="M0 0 H6.2 L7.4 2 H14 V12 H0 Z M2 4.2 V10 H12 V4.2 Z" fill="#b8925a"/><circle cx="5" cy="7.1" r="1.8" fill="#62a6d8"/></g></svg>
<div class="t" style="left:83px;top:582.5px">drawable</div>
<svg class="ic" style="left:46px;top:606px" width="8" height="9" viewBox="0 0 8 9"><path d="M0 0 L8 4.5 L0 9z" fill="#a0a0a0"/></svg>
<svg class="ic" style="left:65px;top:602px" width="16" height="16" viewBox="0 0 16 16"><g transform="translate(0 2)"><path fill-rule="evenodd" d="M0 0 H6.2 L7.4 2 H14 V12 H0 Z M2 4.2 V10 H12 V4.2 Z" fill="#b8925a"/><circle cx="5" cy="7.1" r="1.8" fill="#62a6d8"/></g></svg>
<div class="t" style="left:83px;top:602.5px">drawable-hdpi</div>
<svg class="ic" style="left:46px;top:626px" width="8" height="9" viewBox="0 0 8 9"><path d="M0 0 L8 4.5 L0 9z" fill="#a0a0a0"/></svg>
<svg class="ic" style="left:65px;top:622px" width="16" height="16" viewBox="0 0 16 16"><g transform="translate(0 2)"><path fill-rule="evenodd" d="M0 0 H6.2 L7.4 2 H14 V12 H0 Z M2 4.2 V10 H12 V4.2 Z" fill="#b8925a"/><circle cx="5" cy="7.1" r="1.8" fill="#62a6d8"/></g></svg>
<div class="t" style="left:83px;top:622.5px">drawable-mdpi</div>
<svg class="ic" style="left:46px;top:646px" width="8" height="9" viewBox="0 0 8 9"><path d="M0 0 L8 4.5 L0 9z" fill="#a0a0a0"/></svg>
<svg class="ic" style="left:65px;top:642px" width="16" height="16" viewBox="0 0 16 16"><g transform="translate(0 2)"><path fill-rule="evenodd" d="M0 0 H6.2 L7.4 2 H14 V12 H0 Z M2 4.2 V10 H12 V4.2 Z" fill="#b8925a"/><circle cx="5" cy="7.1" r="1.8" fill="#62a6d8"/></g></svg>
<div class="t" style="left:83px;top:642.5px">drawable-xhdpi</div>
<svg class="ic" style="left:46px;top:666px" width="8" height="9" viewBox="0 0 8 9"><path d="M0 0 L8 4.5 L0 9z" fill="#a0a0a0"/></svg>
<svg class="ic" style="left:65px;top:662px" width="16" height="16" viewBox="0 0 16 16"><g transform="translate(0 2)"><path fill-rule="evenodd" d="M0 0 H6.2 L7.4 2 H14 V12 H0 Z M2 4.2 V10 H12 V4.2 Z" fill="#b8925a"/><circle cx="5" cy="7.1" r="1.8" fill="#62a6d8"/></g></svg>
<div class="t" style="left:83px;top:662.5px">drawable-xxhdpi</div>
<svg class="ic" style="left:46px;top:686px" width="8" height="9" viewBox="0 0 8 9"><path d="M0 0 L8 4.5 L0 9z" fill="#a0a0a0"/></svg>
<svg class="ic" style="left:65px;top:682px" width="16" height="16" viewBox="0 0 16 16"><g transform="translate(0 2)"><path fill-rule="evenodd" d="M0 0 H6.2 L7.4 2 H14 V12 H0 Z M2 4.2 V10 H12 V4.2 Z" fill="#b8925a"/><circle cx="5" cy="7.1" r="1.8" fill="#62a6d8"/></g></svg>
<div class="t" style="left:83px;top:682.5px">layout</div>
<svg class="ic" style="left:46px;top:706px" width="8" height="9" viewBox="0 0 8 9"><path d="M0 0 L8 4.5 L0 9z" fill="#a0a0a0"/></svg>
<svg class="ic" style="left:65px;top:702px" width="16" height="16" viewBox="0 0 16 16"><g transform="translate(0 2)"><path fill-rule="evenodd" d="M0 0 H6.2 L7.4 2 H14 V12 H0 Z M2 4.2 V10 H12 V4.2 Z" fill="#b8925a"/><circle cx="5" cy="7.1" r="1.8" fill="#62a6d8"/></g></svg>
<div class="t" style="left:83px;top:702.5px">menu</div>
<svg class="ic" style="left:46px;top:726px" width="8" height="9" viewBox="0 0 8 9"><path d="M0 0 L8 4.5 L0 9z" fill="#a0a0a0"/></svg>
<svg class="ic" style="left:65px;top:722px" width="16" height="16" viewBox="0 0 16 16"><g transform="translate(0 2)"><path fill-rule="evenodd" d="M0 0 H6.2 L7.4 2 H14 V12 H0 Z M2 4.2 V10 H12 V4.2 Z" fill="#b8925a"/><circle cx="5" cy="7.1" r="1.8" fill="#62a6d8"/></g></svg>
<div class="t" style="left:83px;top:722.5px">mipmap-hdpi</div>
<svg class="ic" style="left:46px;top:746px" width="8" height="9" viewBox="0 0 8 9"><path d="M0 0 L8 4.5 L0 9z" fill="#a0a0a0"/></svg>
<svg class="ic" style="left:65px;top:742px" width="16" height="16" viewBox="0 0 16 16"><g transform="translate(0 2)"><path fill-rule="evenodd" d="M0 0 H6.2 L7.4 2 H14 V12 H0 Z M2 4.2 V10 H12 V4.2 Z" fill="#b8925a"/><circle cx="5" cy="7.1" r="1.8" fill="#62a6d8"/></g></svg>
<div class="t" style="left:83px;top:742.5px">mipmap-mdpi</div>
<svg class="ic" style="left:46px;top:766px" width="8" height="9" viewBox="0 0 8 9"><path d="M0 0 L8 4.5 L0 9z" fill="#a0a0a0"/></svg>
<svg class="ic" style="left:65px;top:762px" width="16" height="16" viewBox="0 0 16 16"><g transform="translate(0 2)"><path fill-rule="evenodd" d="M0 0 H6.2 L7.4 2 H14 V12 H0 Z M2 4.2 V10 H12 V4.2 Z" fill="#b8925a"/><circle cx="5" cy="7.1" r="1.8" fill="#62a6d8"/></g></svg>
<div class="t" style="left:83px;top:762.5px">mipmap-xhdpi</div>
<svg class="ic" style="left:46px;top:786px" width="8" height="9" viewBox="0 0 8 9"><path d="M0 0 L8 4.5 L0 9z" fill="#a0a0a0"/></svg>
<svg class="ic" style="left:65px;top:782px" width="16" height="16" viewBox="0 0 16 16"><g transform="translate(0 2)"><path fill-rule="evenodd" d="M0 0 H6.2 L7.4 2 H14 V12 H0 Z M2 4.2 V10 H12 V4.2 Z" fill="#b8925a"/><circle cx="5" cy="7.1" r="1.8" fill="#62a6d8"/></g></svg>
<div class="t" style="left:83px;top:782.5px">mipmap-xxhdpi</div>
<svg class="ic" style="left:46px;top:806px" width="8" height="9" viewBox="0 0 8 9"><path d="M0 0 L8 4.5 L0 9z" fill="#a0a0a0"/></svg>
<svg class="ic" style="left:65px;top:802px" width="16" height="16" viewBox="0 0 16 16"><g transform="translate(0 2)"><path fill-rule="evenodd" d="M0 0 H6.2 L7.4 2 H14 V12 H0 Z M2 4.2 V10 H12 V4.2 Z" fill="#b8925a"/><circle cx="5" cy="7.1" r="1.8" fill="#62a6d8"/></g></svg>
<div class="t" style="left:83px;top:802.5px">mipmap-xxxhdpi</div>
<svg class="ic" style="left:46px;top:826px" width="8" height="9" viewBox="0 0 8 9"><path d="M0 0 L8 4.5 L0 9z" fill="#a0a0a0"/></svg>
<svg class="ic" style="left:65px;top:822px" width="16" height="16" viewBox="0 0 16 16"><g transform="translate(0 2)"><path fill-rule="evenodd" d="M0 0 H6.2 L7.4 2 H14 V12 H0 Z M2 4.2 V10 H12 V4.2 Z" fill="#b8925a"/><circle cx="5" cy="7.1" r="1.8" fill="#62a6d8"/></g></svg>
<div class="t" style="left:83px;top:822.5px">values</div>
<svg class="ic" style="left:45px;top:842px" width="16" height="16" viewBox="0 0 16 16"><path d="M2.6 5.5 V1.6 H8.6 L11.6 4.6 V5.5 M2.6 11.5 V14.6 H11.6 V11.5" fill="#f2f2f2" stroke="#9a9a9a" stroke-width="1.2"/><path d="M8.6 1.6 V4.6 H11.6" fill="none" stroke="#b0b0b0" stroke-width="0.8"/><rect x="1.4" y="5.3" width="12.8" height="6.6" fill="#eda23c"/><path d="M6 6.6 L4 8.6 L6 10.6 M9.6 6.6 L11.6 8.6 L9.6 10.6" stroke="#5a3408" stroke-width="1.2" fill="none"/></svg>
<svg class="ic" style="left:51px;top:849px" width="10" height="8" viewBox="0 0 10 8"><g transform="translate(5 4) scale(0.6)"><path d="M-5 0 a5 4.6 0 0 1 10 0 z" fill="#97b92f"/><rect x="-5" y="0.8" width="10" height="5" rx="0.8" fill="#97b92f"/><rect x="-7" y="0.8" width="1.5" height="4" rx="0.7" fill="#97b92f"/><rect x="5.5" y="0.8" width="1.5" height="4" rx="0.7" fill="#97b92f"/><path d="M-3 -4 l-1.2 -1.6 M3 -4 l1.2 -1.6" stroke="#97b92f" stroke-width="0.7"/></g></svg>
<div class="t" style="left:63px;top:842.5px">AndroidManifest.xml</div>
<svg class="ic" style="left:6px;top:866px" width="8" height="9" viewBox="0 0 8 9"><path d="M0 0 L8 4.5 L0 9z" fill="#a0a0a0"/></svg>
<svg class="ic" style="left:25px;top:862px" width="16" height="16" viewBox="0 0 16 16"><g transform="translate(0 2)"><path fill-rule="evenodd" d="M0 0 H6.2 L7.4 2 H14 V12 H0 Z M2 4.2 V10 H12 V4.2 Z" fill="#b8925a"/></g></svg>
<div class="t" style="left:43px;top:862.5px">test</div>
<div class="t" style="left:60px;top:2.5px;color:#7f7f7f">E:\hanu\ProiectAIDM</div>
<div class="abs" style="left:41px;top:863px;width:200px;height:11px;background:rgba(0,0,0,0.10)"></div>
</div>
<div class="abs" style="left:274px;top:122px;width:10px;height:639px;background:rgba(0,0,0,0.10)"></div>
<div class="abs" style="left:284px;top:99px;width:1px;height:899px;background:#9e9e9e"></div>
<div class="abs" style="left:285px;top:99px;width:1613px;height:23px;background:#e9e9e9;border-bottom:1px solid #a3a3a3"></div>
<div class="abs" style="left:285px;top:99px;width:1033px;height:23px;background:#d4d4d4;border-bottom:1px solid #a3a3a3"></div>
<div class="abs" style="left:285px;top:122px;width:1613px;height:4px;background:#fff;border-bottom:1px solid #a6a6a6"></div>
<div class="abs" style="left:716px;top:99px;width:170px;height:26px;background:#fff"></div>
<svg class="ic" style="left:292.5px;top:103px" width="15" height="15" viewBox="0 0 16 16"><circle cx="8" cy="8" r="7.3" fill="#a8d8f5" stroke="#6fbaea" stroke-width="1"/><path d="M10.4 6.1 A2.9 2.9 0 1 0 10.4 9.9" fill="none" stroke="#3a4a5a" stroke-width="1.3"/></svg>
<div class="t" style="left:312px;top:103px;letter-spacing:0.09px">MainActivity.java</div>
<svg class="ic" style="left:409px;top:106.7px" width="8" height="8" viewBox="0 0 8 8"><path d="M0.9 0.9 L7.1 7.1 M7.1 0.9 L0.9 7.1" stroke="#6e6e6e" stroke-width="1.6"/></svg>
<div class="abs" style="left:425px;top:99px;width:1px;height:23px;background:#a3a3a3"></div>
<svg class="ic" style="left:433.5px;top:103px" width="15" height="15" viewBox="0 0 16 16"><circle cx="8" cy="8" r="7.3" fill="#a8d8f5" stroke="#6fbaea" stroke-width="1"/><path d="M10.4 6.1 A2.9 2.9 0 1 0 10.4 9.9" fill="none" stroke="#3a4a5a" stroke-width="1.3"/></svg>
<div class="t" style="left:453px;top:103px;letter-spacing:-0.47px">SplashScreen.java</div>
<svg class="ic" style="left:552px;top:106.7px" width="8" height="8" viewBox="0 0 8 8"><path d="M0.9 0.9 L7.1 7.1 M7.1 0.9 L0.9 7.1" stroke="#6e6e6e" stroke-width="1.6"/></svg>
<div class="abs" style="left:568px;top:99px;width:1px;height:23px;background:#a3a3a3"></div>
<svg class="ic" style="left:576.5px;top:103px" width="15" height="15" viewBox="0 0 16 16"><circle cx="8" cy="8" r="7.3" fill="#a8d8f5" stroke="#6fbaea" stroke-width="1"/><path d="M10.4 6.1 A2.9 2.9 0 1 0 10.4 9.9" fill="none" stroke="#3a4a5a" stroke-width="1.3"/></svg>
<div class="t" style="left:596px;top:103px;letter-spacing:0.08px">Main2Activity.java</div>
<svg class="ic" style="left:700px;top:106.7px" width="8" height="8" viewBox="0 0 8 8"><path d="M0.9 0.9 L7.1 7.1 M7.1 0.9 L0.9 7.1" stroke="#6e6e6e" stroke-width="1.6"/></svg>
<svg class="ic" style="left:724px;top:103px" width="15" height="15" viewBox="0 0 16 16"><circle cx="8" cy="8" r="7.3" fill="#a8d8f5" stroke="#6fbaea" stroke-width="1"/><path d="M10.4 6.1 A2.9 2.9 0 1 0 10.4 9.9" fill="none" stroke="#3a4a5a" stroke-width="1.3"/></svg>
<div class="t" style="left:743px;top:103px;letter-spacing:-0.07px">AddStudentDialog.java</div>
<svg class="ic" style="left:871px;top:106.7px" width="8" height="8" viewBox="0 0 8 8"><path d="M0.9 0.9 L7.1 7.1 M7.1 0.9 L0.9 7.1" stroke="#6e6e6e" stroke-width="1.6"/></svg>
<svg class="ic" style="left:895px;top:102px" width="16" height="16" viewBox="0 0 16 16"><path d="M2.6 5.5 V1.6 H8.6 L11.6 4.6 V5.5 M2.6 11.5 V14.6 H11.6 V11.5" fill="#f2f2f2" stroke="#9a9a9a" stroke-width="1.2"/><path d="M8.6 1.6 V4.6 H11.6" fill="none" stroke="#b0b0b0" stroke-width="0.8"/><rect x="1.4" y="5.3" width="12.8" height="6.6" fill="#eda23c"/><path d="M6 6.6 L4 8.6 L6 10.6 M9.6 6.6 L11.6 8.6 L9.6 10.6" stroke="#5a3408" stroke-width="1.2" fill="none"/></svg>
<div class="t" style="left:914px;top:103px;letter-spacing:0px">activity_main.xml</div>
<svg class="ic" style="left:1012.5px;top:106.7px" width="8" height="8" viewBox="0 0 8 8"><path d="M0.9 0.9 L7.1 7.1 M7.1 0.9 L0.9 7.1" stroke="#6e6e6e" stroke-width="1.6"/></svg>
<div class="abs" style="left:1028px;top:99px;width:1px;height:23px;background:#a3a3a3"></div>
<svg class="ic" style="left:1037px;top:103px" width="15" height="15" viewBox="0 0 16 16"><circle cx="8" cy="8" r="7.3" fill="#a8d8f5" stroke="#6fbaea" stroke-width="1"/><path d="M10.4 6.1 A2.9 2.9 0 1 0 10.4 9.9" fill="none" stroke="#3a4a5a" stroke-width="1.3"/></svg>
<div class="t" style="left:1056px;top:103px;letter-spacing:-0.23px">Student.java</div>
<svg class="ic" style="left:1127.5px;top:106.7px" width="8" height="8" viewBox="0 0 8 8"><path d="M0.9 0.9 L7.1 7.1 M7.1 0.9 L0.9 7.1" stroke="#6e6e6e" stroke-width="1.6"/></svg>
<div class="abs" style="left:1143px;top:99px;width:1px;height:23px;background:#a3a3a3"></div>
<svg class="ic" style="left:1152px;top:103px" width="15" height="15" viewBox="0 0 16 16"><circle cx="8" cy="8" r="7.3" fill="#a8d8f5" stroke="#6fbaea" stroke-width="1"/><path d="M10.4 6.1 A2.9 2.9 0 1 0 10.4 9.9" fill="none" stroke="#3a4a5a" stroke-width="1.3"/></svg>
<div class="t" style="left:1171px;top:103px;letter-spacing:-0.07px">UpdateStudentInfo.java</div>
<svg class="ic" style="left:1301px;top:106.7px" width="8" height="8" viewBox="0 0 8 8"><path d="M0.9 0.9 L7.1 7.1 M7.1 0.9 L0.9 7.1" stroke="#6e6e6e" stroke-width="1.6"/></svg>
<div class="abs" style="left:1317px;top:99px;width:1px;height:23px;background:#a3a3a3"></div>
<div class="abs" style="left:715px;top:99px;width:1px;height:23px;background:#a3a3a3"></div>
<div class="abs" style="left:886px;top:99px;width:1px;height:23px;background:#a3a3a3"></div>
<div class="abs" style="left:285px;top:126px;width:1613px;height:26px;background:#f0f0f0;border-bottom:1px solid #d9d9d9"></div>
<div class="abs mono" style="left:343px;top:128px;width:123px;height:23px;border:1px solid #b8b8b8;background:#f5f5f5;padding:5px 0 0 4px">AddStudentDialog</div>
<div class="abs mono" style="left:469px;top:128px;width:81px;height:23px;border:1px solid #cfc9a4;background:#fdf9de;padding:5px 0 0 4px">onAttach()</div>
<div id="ed" class="abs">
</div>
<div class="abs" style="left:342px;top:152px;width:1556px;height:844px;background:#fff"></div>
<div class="abs" style="left:285px;top:152px;width:57px;height:844px;background:#f0f0f0;border-right:1px solid #c8c8c8"></div>
<div class="abs" style="left:285px;top:407px;width:1613px;height:17px;background:#fffae3"></div>
<div class="abs" style="left:341px;top:407px;width:1px;height:17px;background:#c8c8c8"></div>
<div class="abs" style="left:347px;top:152px;width:1551px;height:34px;background:#f6eabc"></div>
<div class="abs" style="left:347px;top:186px;width:21px;height:17px;background:#f6eabc"></div>
<div class="abs" style="left:1047px;top:152px;width:1px;height:844px;background:#e3e3e3"></div>
<div class="abs" style="left:1047px;top:152px;width:1px;height:34px;background:#e0d5ab"></div>
<div class="abs" style="left:377px;top:271px;width:1px;height:34px;background:#e2e2e2"></div>
<div class="abs" style="left:377px;top:424px;width:1px;height:119px;background:#e2e2e2"></div>
<div class="abs" style="left:405px;top:458px;width:1px;height:17px;background:#e2e2e2"></div>
<div class="abs" style="left:433px;top:509px;width:1px;height:17px;background:#e2e2e2"></div>
<div class="abs" style="left:377px;top:594px;width:1px;height:289px;background:#e2e2e2"></div>
<div class="abs" style="left:405px;top:662px;width:1px;height:204px;background:#e2e2e2"></div>
<div class="abs" style="left:461px;top:679px;width:1px;height:85px;background:#e2e2e2"></div>
<div class="abs" style="left:489px;top:713px;width:1px;height:34px;background:#e2e2e2"></div>
<div class="abs" style="left:461px;top:798px;width:1px;height:51px;background:#e2e2e2"></div>
<div class="abs" style="left:489px;top:815px;width:1px;height:17px;background:#e2e2e2"></div>
<div class="ln" style="top:152px">13</div>
<pre class="cl" style="top:152px"><span class="c">/**</span></pre>
<div class="ln" style="top:169px">14</div>
<pre class="cl" style="top:169px"><span class="c"> * Created by slimJR on 7/21/2017.</span></pre>
<div class="ln" style="top:186px">15</div>
<pre class="cl" style="top:186px"><span class="c"> */</span></pre>
<div class="ln" style="top:203px">16</div>
<div class="ln" style="top:220px">17</div>
<pre class="cl" style="top:220px"><span class="k">public</span> <span class="k">class</span> AddStudentDialog <span class="k">extends</span> DialogFragment {</pre>
<div class="ln" style="top:237px">18</div>
<div class="ln" style="top:254px">19</div>
<pre class="cl" style="top:254px">    <span class="k hl">public</span> <span class="k">interface</span> AddStudentDialogListener {</pre>
<div class="ln" style="top:271px">20</div>
<div class="ln" style="top:288px">21</div>
<pre class="cl" style="top:288px">        <span class="k">void</span> onSaveButtonClick(DialogFragment dialog);</pre>
<div class="ln" style="top:305px">22</div>
<pre class="cl" style="top:305px">    }</pre>
<div class="ln" style="top:322px">23</div>
<div class="ln" style="top:339px">24</div>
<pre class="cl" style="top:339px">    AddStudentDialogListener <span class="f">addStudentDialogListener</span>;</pre>
<div class="ln" style="top:356px">25</div>
<pre class="cl" style="top:356px">    Context <span class="g">context</span>;</pre>
<div class="ln" style="top:373px">26</div>
<div class="ln" style="top:390px">27</div>
<pre class="cl" style="top:390px">    <span class="an">@Override</span></pre>
<div class="ln" style="top:407px">28</div>
<pre class="cl" style="top:407px">    <span class="k">public</span> <span class="k">void</span> <span class="dp">onAttach</span>(Activity activity) <span class="br">{</span></pre>
<div class="ln" style="top:424px">29</div>
<pre class="cl" style="top:424px">        <span class="k">super</span>.<span class="dp">onAttach</span>(activity);</pre>
<div class="ln" style="top:441px">30</div>
<pre class="cl" style="top:441px">        <span class="k">try</span>{</pre>
<div class="ln" style="top:458px">31</div>
<pre class="cl" style="top:458px">            <span class="f">addStudentDialogListener</span> = (AddStudentDialogListener) activity;</pre>
<div class="ln" style="top:475px">32</div>
<pre class="cl" style="top:475px">        } <span class="k">catch</span> (ClassCastException e){</pre>
<div class="ln" style="top:492px">33</div>
<pre class="cl" style="top:492px">            <span class="k">throw</span> <span class="k">new</span> ClassCastException(activity.toString()</pre>
<div class="ln" style="top:509px">34</div>
<pre class="cl" style="top:509px">                    + <span class="s">"must implement AddStudentDialogListener"</span>);</pre>
<div class="ln" style="top:526px">35</div>
<pre class="cl" style="top:526px">        }</pre>
<div class="ln" style="top:543px">36</div>
<pre class="cl" style="top:543px">    <span class="br">}</span></pre>
<div class="ln" style="top:560px">37</div>
<div class="ln" style="top:577px">38</div>
<pre class="cl" style="top:577px">    <span class="k">public</span> Dialog onCreateDialog(Bundle savedInstanceState) {</pre>
<div class="ln" style="top:594px">39</div>
<div class="ln" style="top:611px">40</div>
<pre class="cl" style="top:611px">        AlertDialog.Builder builder = <span class="k">new</span> AlertDialog.Builder(getActivity());</pre>
<div class="ln" style="top:628px">41</div>
<pre class="cl" style="top:628px">        LayoutInflater inflater = getActivity().getLayoutInflater();</pre>
<div class="ln" style="top:645px">42</div>
<pre class="cl" style="top:645px">        builder.setView(inflater.inflate(R.layout.<span class="sf">student_form</span>, <span class="k hl2">null</span>))</pre>
<div class="ln" style="top:662px">43</div>
<pre class="cl" style="top:662px">                .setPositiveButton(<span class="s">"ADD"</span>, <span class="k">new</span> DialogInterface.OnClickListener() {</pre>
<div class="ln" style="top:679px">44</div>
<div class="ln" style="top:696px">45</div>
<pre class="cl" style="top:696px">                    <span class="k">public</span> <span class="k">void</span> onClick(DialogInterface dialog, <span class="k">int</span> id){</pre>
<div class="ln" style="top:713px">46</div>
<pre class="cl" style="top:713px">                        <span class="f">addStudentDialogListener</span>.onSaveButtonClick(AddStudentDialog.<span class="k">this</span>);</pre>
<div class="ln" style="top:730px">47</div>
<div class="ln" style="top:747px">48</div>
<pre class="cl" style="top:747px">                    }</pre>
<div class="ln" style="top:764px">49</div>
<pre class="cl" style="top:764px">                })</pre>
<div class="ln" style="top:781px">50</div>
<pre class="cl" style="top:781px">                .setNegativeButton(<span class="s">"Cancel"</span>, <span class="k">new</span> DialogInterface.OnClickListener() {</pre>
<div class="ln" style="top:798px">51</div>
<pre class="cl" style="top:798px">                    <span class="k">public</span> <span class="k">void</span> onClick(DialogInterface dialog, <span class="k">int</span> id) {</pre>
<div class="ln" style="top:815px">52</div>
<pre class="cl" style="top:815px">                        AddStudentDialog.<span class="k">this</span>.getDialog().cancel();</pre>
<div class="ln" style="top:832px">53</div>
<pre class="cl" style="top:832px">                    }</pre>
<div class="ln" style="top:849px">54</div>
<pre class="cl" style="top:849px">                });</pre>
<div class="ln" style="top:866px">55</div>
<pre class="cl" style="top:866px">        <span class="k">return</span> builder.create();</pre>
<div class="ln" style="top:883px">56</div>
<pre class="cl" style="top:883px">    }</pre>
<div class="ln" style="top:900px">57</div>
<div class="ln" style="top:917px">58</div>
<pre class="cl" style="top:917px">}</pre>
<div class="ln" style="top:934px">59</div>
<div class="abs" style="left:661px;top:408px;width:2px;height:15px;background:#000"></div>
<svg class="ic" style="left:337px;top:157px" width="10" height="11" viewBox="0 0 10 11"><path d="M0.5 0.5 h8.5 v5.5 l-4.25 4 l-4.25 -4z" fill="#fff" stroke="#b4b4b4"/><path d="M2.5 4.5h4.5" stroke="#9a9a9a"/></svg>
<svg class="ic" style="left:337px;top:259px" width="10" height="11" viewBox="0 0 10 11"><path d="M0.5 0.5 h8.5 v5.5 l-4.25 4 l-4.25 -4z" fill="#fff" stroke="#b4b4b4"/><path d="M2.5 4.5h4.5" stroke="#9a9a9a"/></svg>
<svg class="ic" style="left:337px;top:412px" width="10" height="11" viewBox="0 0 10 11"><path d="M0.5 0.5 h8.5 v5.5 l-4.25 4 l-4.25 -4z" fill="#fff" stroke="#b4b4b4"/><path d="M2.5 4.5h4.5" stroke="#9a9a9a"/></svg>
<svg class="ic" style="left:337px;top:582px" width="10" height="11" viewBox="0 0 10 11"><path d="M0.5 0.5 h8.5 v5.5 l-4.25 4 l-4.25 -4z" fill="#fff" stroke="#b4b4b4"/><path d="M2.5 4.5h4.5" stroke="#9a9a9a"/></svg>
<svg class="ic" style="left:337px;top:667px" width="10" height="11" viewBox="0 0 10 11"><path d="M0.5 0.5 h8.5 v5.5 l-4.25 4 l-4.25 -4z" fill="#fff" stroke="#b4b4b4"/><path d="M2.5 4.5h4.5" stroke="#9a9a9a"/></svg>
<svg class="ic" style="left:337px;top:786px" width="10" height="11" viewBox="0 0 10 11"><path d="M0.5 0.5 h8.5 v5.5 l-4.25 4 l-4.25 -4z" fill="#fff" stroke="#b4b4b4"/><path d="M2.5 4.5h4.5" stroke="#9a9a9a"/></svg>
<svg class="ic" style="left:337px;top:189.5px" width="10" height="11" viewBox="0 0 10 11"><path d="M0.5 10.5 h8.5 v-5.5 l-4.25 -4 l-4.25 4z" fill="#fff" stroke="#b4b4b4"/><path d="M2.5 6.5h4.5" stroke="#9a9a9a"/></svg>
<svg class="ic" style="left:337px;top:308.5px" width="10" height="11" viewBox="0 0 10 11"><path d="M0.5 10.5 h8.5 v-5.5 l-4.25 -4 l-4.25 4z" fill="#fff" stroke="#b4b4b4"/><path d="M2.5 6.5h4.5" stroke="#9a9a9a"/></svg>
<svg class="ic" style="left:337px;top:546.5px" width="10" height="11" viewBox="0 0 10 11"><path d="M0.5 10.5 h8.5 v-5.5 l-4.25 -4 l-4.25 4z" fill="#fff" stroke="#b4b4b4"/><path d="M2.5 6.5h4.5" stroke="#9a9a9a"/></svg>
<svg class="ic" style="left:337px;top:767.5px" width="10" height="11" viewBox="0 0 10 11"><path d="M0.5 10.5 h8.5 v-5.5 l-4.25 -4 l-4.25 4z" fill="#fff" stroke="#b4b4b4"/><path d="M2.5 6.5h4.5" stroke="#9a9a9a"/></svg>
<svg class="ic" style="left:337px;top:852.5px" width="10" height="11" viewBox="0 0 10 11"><path d="M0.5 10.5 h8.5 v-5.5 l-4.25 -4 l-4.25 4z" fill="#fff" stroke="#b4b4b4"/><path d="M2.5 6.5h4.5" stroke="#9a9a9a"/></svg>
<svg class="ic" style="left:337px;top:886.5px" width="10" height="11" viewBox="0 0 10 11"><path d="M0.5 10.5 h8.5 v-5.5 l-4.25 -4 l-4.25 4z" fill="#fff" stroke="#b4b4b4"/><path d="M2.5 6.5h4.5" stroke="#9a9a9a"/></svg>
<svg class="ic" style="left:312px;top:220px" width="15" height="15" viewBox="0 0 16 16"><path d="M2.6 5.5 V1.6 H8.6 L11.6 4.6 V5.5 M2.6 11.5 V14.6 H11.6 V11.5" fill="#f2f2f2" stroke="#9a9a9a" stroke-width="1.2"/><path d="M8.6 1.6 V4.6 H11.6" fill="none" stroke="#b0b0b0" stroke-width="0.8"/><rect x="1.4" y="5.3" width="12.8" height="6.6" fill="#eda23c"/><path d="M6 6.6 L4 8.6 L6 10.6 M9.6 6.6 L11.6 8.6 L9.6 10.6" stroke="#5a3408" stroke-width="1.2" fill="none"/></svg>
<svg class="ic" style="left:300px;top:254px" width="40" height="17" viewBox="300 254 40 17"><circle cx="319" cy="261" r="4.1" fill="#5fa85f"/><path d="M317.8 259.3h2.4M317.8 262.7h2.4M319 259.3v3.4" stroke="#1d3d1d" stroke-width="0.9"/><path d="M324.6 256 V266" fill="none" stroke="#444" stroke-width="1.1"/><path d="M322 265 L324.6 268.2 L327.2 265z" fill="#444"/></svg>
<svg class="ic" style="left:300px;top:288px" width="40" height="17" viewBox="300 288 40 17"><circle cx="319" cy="295" r="4.1" fill="#5fa85f"/><path d="M317.8 293.3h2.4M317.8 296.7h2.4M319 293.3v3.4" stroke="#1d3d1d" stroke-width="0.9"/><path d="M324.6 290 V300" fill="none" stroke="#444" stroke-width="1.1"/><path d="M322 299 L324.6 302.2 L327.2 299z" fill="#444"/></svg>
<svg class="ic" style="left:300px;top:407px" width="40" height="17" viewBox="300 407 40 17"><circle cx="315" cy="416" r="4.1" fill="#5aa5dc"/><circle cx="315" cy="416" r="1.5" fill="none" stroke="#223344" stroke-width="1.1"/><path d="M320.5 421 V409.5 M318.2 412.2 L320.5 409.3 L322.8 412.2" fill="none" stroke="#d04a3a" stroke-width="1.1"/></svg>
<svg class="ic" style="left:300px;top:577px" width="40" height="17" viewBox="300 577 40 17"><circle cx="315" cy="586" r="4.1" fill="#5aa5dc"/><circle cx="315" cy="586" r="1.5" fill="none" stroke="#223344" stroke-width="1.1"/><path d="M320.5 591 V579.5 M318.2 582.2 L320.5 579.3 L322.8 582.2" fill="none" stroke="#d04a3a" stroke-width="1.1"/></svg>
<svg class="ic" style="left:300px;top:696px" width="40" height="17" viewBox="300 696 40 17"><circle cx="315" cy="705" r="4.1" fill="#5fa85f"/><path d="M313.8 703.3h2.4M313.8 706.7h2.4M315 703.3v3.4" stroke="#1d3d1d" stroke-width="0.9"/><path d="M320.5 710 V698.5 M318.2 701.2 L320.5 698.3 L322.8 701.2" fill="none" stroke="#d04a3a" stroke-width="1.1"/></svg>
<svg class="ic" style="left:300px;top:798px" width="40" height="17" viewBox="300 798 40 17"><circle cx="315" cy="807" r="4.1" fill="#5fa85f"/><path d="M313.8 805.3h2.4M313.8 808.7h2.4M315 805.3v3.4" stroke="#1d3d1d" stroke-width="0.9"/><path d="M320.5 812 V800.5 M318.2 803.2 L320.5 800.3 L322.8 803.2" fill="none" stroke="#d04a3a" stroke-width="1.1"/></svg>
<svg class="ic" style="left:356px;top:393px" width="11" height="13" viewBox="0 0 11 13"><circle cx="5.5" cy="5" r="4.8" fill="#f2a33a"/><rect x="3.5" y="9.5" width="4" height="3" fill="#666"/></svg>
<div class="abs" style="left:1888px;top:349px;width:10px;height:617px;background:#e3e3e3"></div>
<div class="abs" style="left:1884px;top:323px;width:14px;height:26px;background:#d4aa00;border-left:3px solid #e6bd00"></div>
<div class="abs" style="left:1886px;top:154px;width:10px;height:10px;background:#e8c800"></div>
<div class="abs" style="left:1884px;top:400px;width:14px;height:2px;background:#d4aa00"></div>
<div class="abs" style="left:1884px;top:478px;width:14px;height:2px;background:#d4aa00"></div>
<div class="abs" style="left:1884px;top:517px;width:14px;height:2px;background:#d4aa00"></div>
<div class="abs" style="left:1884px;top:530px;width:14px;height:2px;background:#d4aa00"></div>
<div class="abs" style="left:1884px;top:698px;width:14px;height:2px;background:#d4aa00"></div>
<div class="abs" style="left:359px;top:385px;width:349px;height:60px;border:5px solid #000"></div>
<svg class="ic" style="left:725px;top:375px" width="125" height="75" viewBox="725 375 125 75"><path d="M736.8 412.4 L786.5 384.5 L786.5 398.4 L836.6 398.4 L836.6 426.5 L786.5 426.5 L786.5 440.3 Z" fill="none" stroke="#000" stroke-width="5" stroke-linejoin="round"/></svg>
<div class="abs" style="left:285px;top:996px;width:1613px;height:1px;background:#b3b3b3"></div>
<div class="abs" style="left:1898px;top:99px;width:11px;height:899px;background:#e9e9e9;border-left:1px solid #a6a6a6"></div>
<div class="vtr" style="left:1916px;top:127px">Gradle</div>
<svg class="ic" style="left:1900px;top:107px" width="10" height="16" viewBox="0 0 10 16"><circle cx="9.5" cy="8" r="5" fill="none" stroke="#85c260" stroke-width="2.1"/><circle cx="10" cy="8" r="2" fill="#2ea86a"/></svg>
<div class="vtr" style="left:1916px;top:906px">Android Model</div>
<svg class="ic" style="left:1902px;top:889.5px" width="12" height="13.2" viewBox="0 0 12 13.2"><g transform="scale(1)"><path d="M3.2 0.3 L4.4 1.9 M8.8 0.3 L7.6 1.9" stroke="#7ba60f" stroke-width="0.7"/><path d="M3 4.4 a3 3.1 0 0 1 6 0z" fill="#7ba60f"/><circle cx="4.7" cy="3" r="0.45" fill="#fff"/><circle cx="7.3" cy="3" r="0.45" fill="#fff"/><rect x="3" y="5" width="6" height="5.3" fill="#7ba60f"/><rect x="0.4" y="5" width="1.9" height="4.4" rx="0.9" fill="#7ba60f"/><rect x="9.7" y="5" width="1.9" height="4.4" rx="0.9" fill="#7ba60f"/><rect x="3.9" y="10" width="1.6" height="3.1" rx="0.6" fill="#7ba60f"/><rect x="6.5" y="10" width="1.6" height="3.1" rx="0.6" fill="#7ba60f"/></g></svg>
<div class="abs" style="left:0;top:997px;width:1909px;height:22px;background:#e9e9e9;border-bottom:1px solid #a9a9a9"></div>
<div class="abs" style="left:0;top:996px;width:285px;height:1px;background:#b3b3b3"></div>
<div class="abs" style="left:1898px;top:996px;width:11px;height:1px;background:#b3b3b3"></div>
<svg class="ic" style="left:29px;top:1002px" width="12" height="13" viewBox="0 0 12 13"><path d="M1 0.5 L11.5 6.5 L1 12.5z" fill="#2ea32e"/></svg>
<div class="t bt" style="left:45.5px;top:1001px;color:#000"><u>4</u>: Run</div>
<svg class="ic" style="left:98px;top:1001px" width="14" height="14" viewBox="0 0 14 14"><circle cx="7" cy="8.5" r="4.5" fill="#f0c9a0"/><path d="M2.5 8 a4.5 4.5 0 0 1 9 0z" fill="#555"/><rect x="3" y="11" width="8" height="3" fill="#3b8fc8"/><ellipse cx="3.5" cy="3" rx="3" ry="2.2" fill="#fff" stroke="#777" stroke-width="0.8"/></svg>
<div class="t bt" style="left:115.5px;top:1001px;color:#000">TODO</div>
<svg class="ic" style="left:169px;top:1002px" width="12" height="13.2" viewBox="0 0 12 13.2"><g transform="scale(1)"><path d="M3.2 0.3 L4.4 1.9 M8.8 0.3 L7.6 1.9" stroke="#7ba60f" stroke-width="0.7"/><path d="M3 4.4 a3 3.1 0 0 1 6 0z" fill="#7ba60f"/><circle cx="4.7" cy="3" r="0.45" fill="#fff"/><circle cx="7.3" cy="3" r="0.45" fill="#fff"/><rect x="3" y="5" width="6" height="5.3" fill="#7ba60f"/><rect x="0.4" y="5" width="1.9" height="4.4" rx="0.9" fill="#7ba60f"/><rect x="9.7" y="5" width="1.9" height="4.4" rx="0.9" fill="#7ba60f"/><rect x="3.9" y="10" width="1.6" height="3.1" rx="0.6" fill="#7ba60f"/><rect x="6.5" y="10" width="1.6" height="3.1" rx="0.6" fill="#7ba60f"/></g></svg>
<div class="t bt" style="left:186px;top:1001px;color:#000"><span style="letter-spacing:0.35px"><u>6</u>: Android Monitor</span></div>
<svg class="ic" style="left:309px;top:1002px" width="13" height="13" viewBox="0 0 13 13"><rect x="0.5" y="0.5" width="12" height="12" fill="#f6d9a8" stroke="#d08a30" stroke-width="1"/><path d="M2.5 4h8M2.5 6.5h8M2.5 9h8" stroke="#b06a18" stroke-width="1"/></svg>
<div class="t bt" style="left:327px;top:1001px;color:#000"><span style="letter-spacing:-0.3px"><u>0</u>: Messages</span></div>
<svg class="ic" style="left:411px;top:1003px" width="11" height="11" viewBox="0 0 11 11"><rect x="0.5" y="0.5" width="10" height="10" fill="#f4f4f4" stroke="#6a6a6a" stroke-width="1"/><path d="M2.5 3.5l2 2-2 2M5.5 7.5h3" stroke="#555" stroke-width="0.9" fill="none"/></svg>
<div class="t bt" style="left:426px;top:1001px;color:#000">Terminal</div>
<svg class="ic" style="left:1699px;top:1000px" width="16" height="16" viewBox="0 0 16 16"><circle cx="7.5" cy="7.5" r="7" fill="#8ccf8c"/><path d="M10 12.5 l5 3 -2.5-5z" fill="#8ccf8c"/></svg>
<div class="t" style="left:1704px;top:1000px;font-size:10px;color:#1d4d1d">2</div>
<div class="t bt" style="left:1719.5px;top:1001px;color:#000"><span style="letter-spacing:-0.2px">Event Log</span></div>
<svg class="ic" style="left:1792px;top:1002px" width="13" height="13" viewBox="0 0 13 13"><rect x="0.6" y="0.6" width="11.8" height="11.8" fill="#e6f0fa" stroke="#4a86c8" stroke-width="1.2"/><rect x="0.6" y="0.6" width="11.8" height="2.2" fill="#4a86c8"/><path d="M3 5.5h7M3 7.8h5M3 10h6" stroke="#555" stroke-width="1"/></svg>
<div class="t bt" style="left:1810px;top:1001px;color:#000">Gradle Console</div>
<div class="abs" style="left:0;top:1020px;width:1909px;height:20px;background:#e9e9e9"></div>
<div class="abs" style="left:9px;top:1024px;width:14px;height:12px;border:1px solid #6e6e6e;background:#bdbdbd;box-shadow:inset 0 0 0 1px #e9e9e9"></div>
<div class="t" style="left:31px;top:1022px;letter-spacing:-0.12px">Gradle build finished in 18s 604ms (3 minutes ago)</div>
<div class="t" style="left:1602.5px;top:1022px;letter-spacing:-0.6px">28:46</div>
<div class="t" style="left:1640.5px;top:1022px;letter-spacing:-0.9px">CRLF</div>
<svg class="ic" style="left:1668.5px;top:1025px" width="5" height="10" viewBox="0 0 5 10"><path d="M0 4 L2.5 0.5 L5 4z M0 6 L2.5 9.5 L5 6z" fill="#333"/></svg>
<div class="t" style="left:1684.5px;top:1022px;letter-spacing:-0.2px">UTF-8</div>
<svg class="ic" style="left:1717.5px;top:1025px" width="5" height="10" viewBox="0 0 5 10"><path d="M0 4 L2.5 0.5 L5 4z M0 6 L2.5 9.5 L5 6z" fill="#333"/></svg>
<div class="t" style="left:1731.5px;top:1022px;color:#9a9a9a">Context: &lt;no context&gt;</div>
<svg class="ic" style="left:1877px;top:1025px" width="10" height="11" viewBox="0 0 10 11"><path d="M1 5 V3 a2 2 0 0 1 4 0" fill="none" stroke="#6e6e6e" stroke-width="1.2"/><rect x="2.5" y="4.5" width="6.5" height="6" rx="0.8" fill="#6e6e6e"/><rect x="4.6" y="6.5" width="2.3" height="2" fill="#e9e9e9"/></svg>
<svg class="ic" style="left:1899px;top:1022px" width="12" height="15" viewBox="0 0 12 15"><rect x="1" y="1" width="10" height="8" rx="2" fill="#f4f4f4" stroke="#6e6e6e" stroke-width="1"/><circle cx="4" cy="5" r="1" fill="#444"/><circle cx="8" cy="5" r="1" fill="#444"/><path d="M1 14 a5 5 0 0 1 10 0" fill="#f4f4f4" stroke="#6e6e6e" stroke-width="1"/></svg>
<div class="abs" style="left:0;top:1040px;width:1909px;height:3px;background:#c9b78d;overflow:hidden"><div class="abs" style="left:0;top:0;width:753px;height:3px;background:#c08430"></div><div class="abs" style="left:175px;top:0;width:55px;height:3px;background:#d8c8a0"></div><div class="abs" style="left:237px;top:0;width:58px;height:3px;background:#d8c8a0"></div><div class="abs" style="left:361px;top:0;width:58px;height:3px;background:#d8c8a0"></div><div class="t" style="left:791px;top:-3px;color:#3a3326">Platform and Plugin Updates: The following component is ready to update: Google APIs Intel x86 Atom System Image (7 minutes ago)</div><div class="t" style="left:1607px;top:-3px;color:#3a3326">9:55&nbsp;&nbsp; LF&#8597;&nbsp; UTF-8&#8597;&nbsp; <span style="color:#8d8468">Context: &lt;no context&gt;</span></div></div>
</body></html>
